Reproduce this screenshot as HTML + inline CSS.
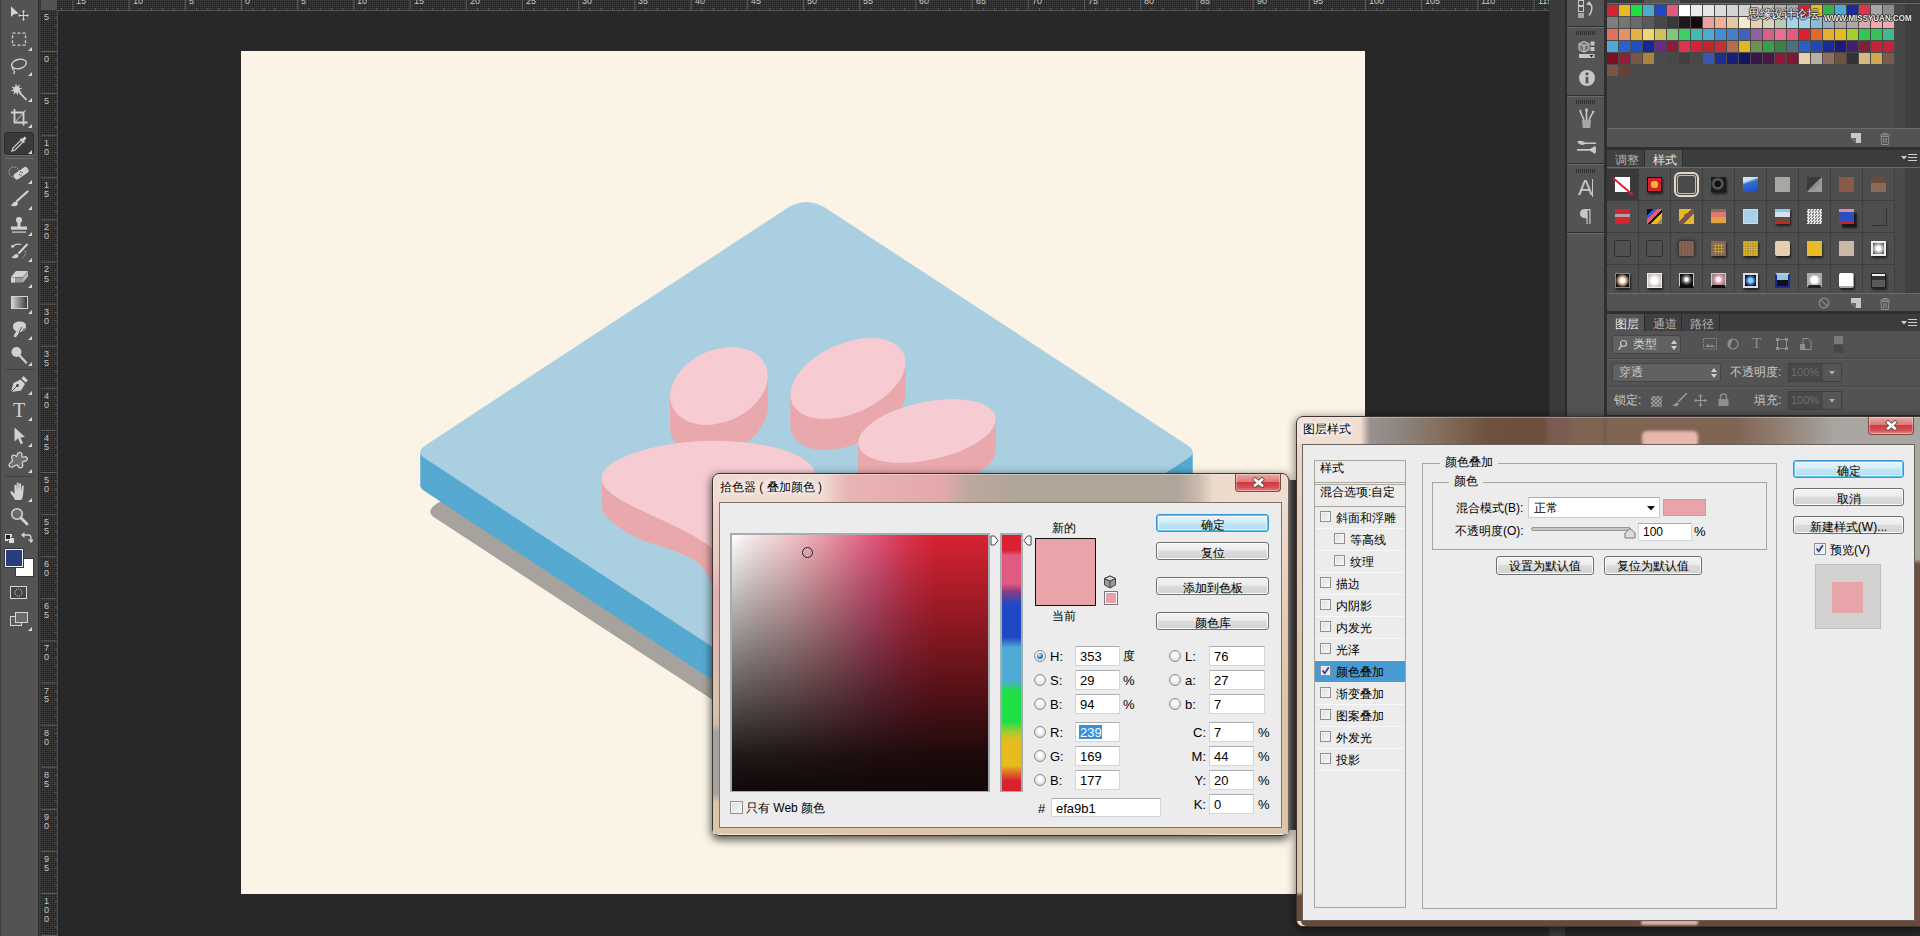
<!DOCTYPE html>
<html lang="zh"><head><meta charset="utf-8"><title>Photoshop</title>
<style>
html,body{margin:0;padding:0}
body{width:1920px;height:936px;overflow:hidden;background:#282828;position:relative;font-family:"Liberation Sans",sans-serif}
#r{position:absolute;left:0;top:0;width:1920px;height:936px;overflow:hidden}
#r div,#r svg,#r span.t{position:absolute}
#r span.t{white-space:nowrap;display:block}
</style></head>
<body><div id="r">
<!-- document canvas + artwork -->
<div style="left:241px;top:51px;width:1124px;height:843px;background:#fbf4e6"></div>
<svg style="left:0;top:0" width="1920" height="936" viewBox="0 0 1920 936"><path d="M796.6 267.9Q816.5 254.9 836.4 267.9L1197.8 504.8Q1207.8 511.4 1197.8 518.0L836.4 754.9Q816.5 767.9 796.6 754.9L435.2 518.0Q425.2 511.4 435.2 504.8Z" fill="#a6a29e"/><path d="M786.6 241.5Q806.5 228.5 826.4 241.5L1187.8 478.4Q1197.8 485.0 1187.8 491.6L826.4 728.5Q806.5 741.5 786.6 728.5L425.2 491.6Q415.2 485.0 425.2 478.4Z" fill="#56a9d0"/><path d="M786.6 238.5Q806.5 225.5 826.4 238.5L1187.8 475.4Q1197.8 482.0 1187.8 488.6L826.4 725.5Q806.5 738.5 786.6 725.5L425.2 488.6Q415.2 482.0 425.2 475.4Z" fill="#56a9d0"/><path d="M786.6 235.5Q806.5 222.5 826.4 235.5L1187.8 472.4Q1197.8 479.0 1187.8 485.6L826.4 722.5Q806.5 735.5 786.6 722.5L425.2 485.6Q415.2 479.0 425.2 472.4Z" fill="#56a9d0"/><path d="M786.6 232.5Q806.5 219.5 826.4 232.5L1187.8 469.4Q1197.8 476.0 1187.8 482.6L826.4 719.5Q806.5 732.5 786.6 719.5L425.2 482.6Q415.2 476.0 425.2 469.4Z" fill="#56a9d0"/><path d="M786.6 229.5Q806.5 216.5 826.4 229.5L1187.8 466.4Q1197.8 473.0 1187.8 479.6L826.4 716.5Q806.5 729.5 786.6 716.5L425.2 479.6Q415.2 473.0 425.2 466.4Z" fill="#56a9d0"/><path d="M786.6 226.5Q806.5 213.5 826.4 226.5L1187.8 463.4Q1197.8 470.0 1187.8 476.6L826.4 713.5Q806.5 726.5 786.6 713.5L425.2 476.6Q415.2 470.0 425.2 463.4Z" fill="#56a9d0"/><path d="M786.6 223.5Q806.5 210.5 826.4 223.5L1187.8 460.4Q1197.8 467.0 1187.8 473.6L826.4 710.5Q806.5 723.5 786.6 710.5L425.2 473.6Q415.2 467.0 425.2 460.4Z" fill="#56a9d0"/><path d="M786.6 220.5Q806.5 207.5 826.4 220.5L1187.8 457.4Q1197.8 464.0 1187.8 470.6L826.4 707.5Q806.5 720.5 786.6 707.5L425.2 470.6Q415.2 464.0 425.2 457.4Z" fill="#56a9d0"/><path d="M786.6 217.5Q806.5 204.5 826.4 217.5L1187.8 454.4Q1197.8 461.0 1187.8 467.6L826.4 704.5Q806.5 717.5 786.6 704.5L425.2 467.6Q415.2 461.0 425.2 454.4Z" fill="#56a9d0"/><path d="M786.6 214.5Q806.5 201.5 826.4 214.5L1187.8 451.4Q1197.8 458.0 1187.8 464.6L826.4 701.5Q806.5 714.5 786.6 701.5L425.2 464.6Q415.2 458.0 425.2 451.4Z" fill="#56a9d0"/><path d="M786.6 211.5Q806.5 198.5 826.4 211.5L1187.8 448.4Q1197.8 455.0 1187.8 461.6L826.4 698.5Q806.5 711.5 786.6 698.5L425.2 461.6Q415.2 455.0 425.2 448.4Z" fill="#56a9d0"/><path d="M786.6 208.5Q806.5 195.5 826.4 208.5L1187.8 445.4Q1197.8 452.0 1187.8 458.6L826.4 695.5Q806.5 708.5 786.6 695.5L425.2 458.6Q415.2 452.0 425.2 445.4Z" fill="#a9cfe0"/><ellipse cx="719" cy="417" rx="51" ry="36" transform="rotate(-24 719 417)" fill="#e9a8ac"/><ellipse cx="719" cy="414" rx="51" ry="36" transform="rotate(-24 719 414)" fill="#e9a8ac"/><ellipse cx="719" cy="411" rx="51" ry="36" transform="rotate(-24 719 411)" fill="#e9a8ac"/><ellipse cx="719" cy="408" rx="51" ry="36" transform="rotate(-24 719 408)" fill="#e9a8ac"/><ellipse cx="719" cy="405" rx="51" ry="36" transform="rotate(-24 719 405)" fill="#e9a8ac"/><ellipse cx="719" cy="402" rx="51" ry="36" transform="rotate(-24 719 402)" fill="#e9a8ac"/><ellipse cx="719" cy="399" rx="51" ry="36" transform="rotate(-24 719 399)" fill="#e9a8ac"/><ellipse cx="719" cy="396" rx="51" ry="36" transform="rotate(-24 719 396)" fill="#e9a8ac"/><ellipse cx="719" cy="393" rx="51" ry="36" transform="rotate(-24 719 393)" fill="#e9a8ac"/><ellipse cx="719" cy="390" rx="51" ry="36" transform="rotate(-24 719 390)" fill="#e9a8ac"/><ellipse cx="719" cy="387" rx="51" ry="36" transform="rotate(-24 719 387)" fill="#e9a8ac"/><ellipse cx="848" cy="409.5" rx="61" ry="35" transform="rotate(-24 848 409.5)" fill="#e9a8ac"/><ellipse cx="848" cy="406.5" rx="61" ry="35" transform="rotate(-24 848 406.5)" fill="#e9a8ac"/><ellipse cx="848" cy="403.5" rx="61" ry="35" transform="rotate(-24 848 403.5)" fill="#e9a8ac"/><ellipse cx="848" cy="400.5" rx="61" ry="35" transform="rotate(-24 848 400.5)" fill="#e9a8ac"/><ellipse cx="848" cy="397.5" rx="61" ry="35" transform="rotate(-24 848 397.5)" fill="#e9a8ac"/><ellipse cx="848" cy="394.5" rx="61" ry="35" transform="rotate(-24 848 394.5)" fill="#e9a8ac"/><ellipse cx="848" cy="391.5" rx="61" ry="35" transform="rotate(-24 848 391.5)" fill="#e9a8ac"/><ellipse cx="848" cy="388.5" rx="61" ry="35" transform="rotate(-24 848 388.5)" fill="#e9a8ac"/><ellipse cx="848" cy="385.5" rx="61" ry="35" transform="rotate(-24 848 385.5)" fill="#e9a8ac"/><ellipse cx="848" cy="382.5" rx="61" ry="35" transform="rotate(-24 848 382.5)" fill="#e9a8ac"/><ellipse cx="848" cy="379.5" rx="61" ry="35" transform="rotate(-24 848 379.5)" fill="#e9a8ac"/><ellipse cx="927" cy="462" rx="70" ry="29" transform="rotate(-12 927 462)" fill="#e9a8ac"/><ellipse cx="927" cy="459" rx="70" ry="29" transform="rotate(-12 927 459)" fill="#e9a8ac"/><ellipse cx="927" cy="456" rx="70" ry="29" transform="rotate(-12 927 456)" fill="#e9a8ac"/><ellipse cx="927" cy="453" rx="70" ry="29" transform="rotate(-12 927 453)" fill="#e9a8ac"/><ellipse cx="927" cy="450" rx="70" ry="29" transform="rotate(-12 927 450)" fill="#e9a8ac"/><ellipse cx="927" cy="447" rx="70" ry="29" transform="rotate(-12 927 447)" fill="#e9a8ac"/><ellipse cx="927" cy="444" rx="70" ry="29" transform="rotate(-12 927 444)" fill="#e9a8ac"/><ellipse cx="927" cy="441" rx="70" ry="29" transform="rotate(-12 927 441)" fill="#e9a8ac"/><ellipse cx="927" cy="438" rx="70" ry="29" transform="rotate(-12 927 438)" fill="#e9a8ac"/><ellipse cx="927" cy="435" rx="70" ry="29" transform="rotate(-12 927 435)" fill="#e9a8ac"/><ellipse cx="927" cy="432" rx="70" ry="29" transform="rotate(-12 927 432)" fill="#e9a8ac"/><path d="M602 476V508C604 516 612 522 624.4 531C634 537 645 541.500 656.4 545C668 548.500 674 550.500 680 553C688 556.500 693 559 697 562C701 565.500 703.500 568.500 705 571C708 575.500 710.500 580 712 584L720 600V540L650 480Z" fill="#e9a8ac"/><path d="M602 476 C604 462 640 445 700 441 C760 439 806 452 814 470 C822 492 790 520 800 560 C806 590 830 620 870 650 C800 600 740 560 712 548 C690 530 640 512 616 497 C606 490 601 484 602 476Z" fill="#f6ccd2"/><ellipse cx="719" cy="386" rx="51" ry="36" transform="rotate(-24 719 386)" fill="#f6ccd2"/><ellipse cx="848" cy="378.5" rx="61" ry="35" transform="rotate(-24 848 378.5)" fill="#f6ccd2"/><ellipse cx="927" cy="431" rx="70" ry="29" transform="rotate(-12 927 431)" fill="#f6ccd2"/></svg>
<!-- rulers -->
<div style="left:40px;top:0px;width:1509px;height:11px;background:radial-gradient(circle at 0.500px 0.500px,#454545 0.600px,rgba(69,69,69,0) 0.900px) 0 0/2px 2px,#292929"></div>
<div style="left:40px;top:0px;width:18px;height:936px;background:radial-gradient(circle at 0.500px 0.500px,#454545 0.600px,rgba(69,69,69,0) 0.900px) 0 0/2px 2px,#292929"></div>
<div style="left:41px;top:0px;width:16px;height:10px;background:#535353"></div>
<div style="left:57px;top:10px;width:1492px;height:1px;background:#565656"></div>
<div style="left:57px;top:10px;width:1px;height:926px;background:#4a4a4a"></div>
<svg style="left:40px;top:0" width="1509" height="11"><rect x="21.2" y="8" width="1" height="2" fill="#5e5e5e"/><rect x="32.4" y="0" width="1" height="10" fill="#5e5e5e"/><rect x="43.6" y="8" width="1" height="2" fill="#5e5e5e"/><rect x="54.9" y="8" width="1" height="2" fill="#5e5e5e"/><rect x="66.1" y="8" width="1" height="2" fill="#5e5e5e"/><rect x="77.4" y="8" width="1" height="2" fill="#5e5e5e"/><rect x="88.6" y="0" width="1" height="10" fill="#5e5e5e"/><rect x="99.8" y="8" width="1" height="2" fill="#5e5e5e"/><rect x="111.1" y="8" width="1" height="2" fill="#5e5e5e"/><rect x="122.3" y="8" width="1" height="2" fill="#5e5e5e"/><rect x="133.6" y="8" width="1" height="2" fill="#5e5e5e"/><rect x="144.8" y="0" width="1" height="10" fill="#5e5e5e"/><rect x="156.0" y="8" width="1" height="2" fill="#5e5e5e"/><rect x="167.3" y="8" width="1" height="2" fill="#5e5e5e"/><rect x="178.5" y="8" width="1" height="2" fill="#5e5e5e"/><rect x="189.8" y="8" width="1" height="2" fill="#5e5e5e"/><rect x="201.0" y="0" width="1" height="10" fill="#5e5e5e"/><rect x="212.2" y="8" width="1" height="2" fill="#5e5e5e"/><rect x="223.5" y="8" width="1" height="2" fill="#5e5e5e"/><rect x="234.7" y="8" width="1" height="2" fill="#5e5e5e"/><rect x="246.0" y="8" width="1" height="2" fill="#5e5e5e"/><rect x="257.2" y="0" width="1" height="10" fill="#5e5e5e"/><rect x="268.4" y="8" width="1" height="2" fill="#5e5e5e"/><rect x="279.7" y="8" width="1" height="2" fill="#5e5e5e"/><rect x="290.9" y="8" width="1" height="2" fill="#5e5e5e"/><rect x="302.2" y="8" width="1" height="2" fill="#5e5e5e"/><rect x="313.4" y="0" width="1" height="10" fill="#5e5e5e"/><rect x="324.6" y="8" width="1" height="2" fill="#5e5e5e"/><rect x="335.9" y="8" width="1" height="2" fill="#5e5e5e"/><rect x="347.1" y="8" width="1" height="2" fill="#5e5e5e"/><rect x="358.4" y="8" width="1" height="2" fill="#5e5e5e"/><rect x="369.6" y="0" width="1" height="10" fill="#5e5e5e"/><rect x="380.8" y="8" width="1" height="2" fill="#5e5e5e"/><rect x="392.1" y="8" width="1" height="2" fill="#5e5e5e"/><rect x="403.3" y="8" width="1" height="2" fill="#5e5e5e"/><rect x="414.6" y="8" width="1" height="2" fill="#5e5e5e"/><rect x="425.8" y="0" width="1" height="10" fill="#5e5e5e"/><rect x="437.0" y="8" width="1" height="2" fill="#5e5e5e"/><rect x="448.3" y="8" width="1" height="2" fill="#5e5e5e"/><rect x="459.5" y="8" width="1" height="2" fill="#5e5e5e"/><rect x="470.8" y="8" width="1" height="2" fill="#5e5e5e"/><rect x="482.0" y="0" width="1" height="10" fill="#5e5e5e"/><rect x="493.2" y="8" width="1" height="2" fill="#5e5e5e"/><rect x="504.5" y="8" width="1" height="2" fill="#5e5e5e"/><rect x="515.7" y="8" width="1" height="2" fill="#5e5e5e"/><rect x="527.0" y="8" width="1" height="2" fill="#5e5e5e"/><rect x="538.2" y="0" width="1" height="10" fill="#5e5e5e"/><rect x="549.4" y="8" width="1" height="2" fill="#5e5e5e"/><rect x="560.7" y="8" width="1" height="2" fill="#5e5e5e"/><rect x="571.9" y="8" width="1" height="2" fill="#5e5e5e"/><rect x="583.2" y="8" width="1" height="2" fill="#5e5e5e"/><rect x="594.4" y="0" width="1" height="10" fill="#5e5e5e"/><rect x="605.6" y="8" width="1" height="2" fill="#5e5e5e"/><rect x="616.9" y="8" width="1" height="2" fill="#5e5e5e"/><rect x="628.1" y="8" width="1" height="2" fill="#5e5e5e"/><rect x="639.4" y="8" width="1" height="2" fill="#5e5e5e"/><rect x="650.6" y="0" width="1" height="10" fill="#5e5e5e"/><rect x="661.8" y="8" width="1" height="2" fill="#5e5e5e"/><rect x="673.1" y="8" width="1" height="2" fill="#5e5e5e"/><rect x="684.3" y="8" width="1" height="2" fill="#5e5e5e"/><rect x="695.6" y="8" width="1" height="2" fill="#5e5e5e"/><rect x="706.8" y="0" width="1" height="10" fill="#5e5e5e"/><rect x="718.0" y="8" width="1" height="2" fill="#5e5e5e"/><rect x="729.3" y="8" width="1" height="2" fill="#5e5e5e"/><rect x="740.5" y="8" width="1" height="2" fill="#5e5e5e"/><rect x="751.8" y="8" width="1" height="2" fill="#5e5e5e"/><rect x="763.0" y="0" width="1" height="10" fill="#5e5e5e"/><rect x="774.2" y="8" width="1" height="2" fill="#5e5e5e"/><rect x="785.5" y="8" width="1" height="2" fill="#5e5e5e"/><rect x="796.7" y="8" width="1" height="2" fill="#5e5e5e"/><rect x="808.0" y="8" width="1" height="2" fill="#5e5e5e"/><rect x="819.2" y="0" width="1" height="10" fill="#5e5e5e"/><rect x="830.4" y="8" width="1" height="2" fill="#5e5e5e"/><rect x="841.7" y="8" width="1" height="2" fill="#5e5e5e"/><rect x="852.9" y="8" width="1" height="2" fill="#5e5e5e"/><rect x="864.2" y="8" width="1" height="2" fill="#5e5e5e"/><rect x="875.4" y="0" width="1" height="10" fill="#5e5e5e"/><rect x="886.6" y="8" width="1" height="2" fill="#5e5e5e"/><rect x="897.9" y="8" width="1" height="2" fill="#5e5e5e"/><rect x="909.1" y="8" width="1" height="2" fill="#5e5e5e"/><rect x="920.4" y="8" width="1" height="2" fill="#5e5e5e"/><rect x="931.6" y="0" width="1" height="10" fill="#5e5e5e"/><rect x="942.8" y="8" width="1" height="2" fill="#5e5e5e"/><rect x="954.1" y="8" width="1" height="2" fill="#5e5e5e"/><rect x="965.3" y="8" width="1" height="2" fill="#5e5e5e"/><rect x="976.6" y="8" width="1" height="2" fill="#5e5e5e"/><rect x="987.8" y="0" width="1" height="10" fill="#5e5e5e"/><rect x="999.0" y="8" width="1" height="2" fill="#5e5e5e"/><rect x="1010.3" y="8" width="1" height="2" fill="#5e5e5e"/><rect x="1021.5" y="8" width="1" height="2" fill="#5e5e5e"/><rect x="1032.8" y="8" width="1" height="2" fill="#5e5e5e"/><rect x="1044.0" y="0" width="1" height="10" fill="#5e5e5e"/><rect x="1055.2" y="8" width="1" height="2" fill="#5e5e5e"/><rect x="1066.5" y="8" width="1" height="2" fill="#5e5e5e"/><rect x="1077.7" y="8" width="1" height="2" fill="#5e5e5e"/><rect x="1089.0" y="8" width="1" height="2" fill="#5e5e5e"/><rect x="1100.2" y="0" width="1" height="10" fill="#5e5e5e"/><rect x="1111.4" y="8" width="1" height="2" fill="#5e5e5e"/><rect x="1122.7" y="8" width="1" height="2" fill="#5e5e5e"/><rect x="1133.9" y="8" width="1" height="2" fill="#5e5e5e"/><rect x="1145.2" y="8" width="1" height="2" fill="#5e5e5e"/><rect x="1156.4" y="0" width="1" height="10" fill="#5e5e5e"/><rect x="1167.6" y="8" width="1" height="2" fill="#5e5e5e"/><rect x="1178.9" y="8" width="1" height="2" fill="#5e5e5e"/><rect x="1190.1" y="8" width="1" height="2" fill="#5e5e5e"/><rect x="1201.4" y="8" width="1" height="2" fill="#5e5e5e"/><rect x="1212.6" y="0" width="1" height="10" fill="#5e5e5e"/><rect x="1223.8" y="8" width="1" height="2" fill="#5e5e5e"/><rect x="1235.1" y="8" width="1" height="2" fill="#5e5e5e"/><rect x="1246.3" y="8" width="1" height="2" fill="#5e5e5e"/><rect x="1257.6" y="8" width="1" height="2" fill="#5e5e5e"/><rect x="1268.8" y="0" width="1" height="10" fill="#5e5e5e"/><rect x="1280.0" y="8" width="1" height="2" fill="#5e5e5e"/><rect x="1291.3" y="8" width="1" height="2" fill="#5e5e5e"/><rect x="1302.5" y="8" width="1" height="2" fill="#5e5e5e"/><rect x="1313.8" y="8" width="1" height="2" fill="#5e5e5e"/><rect x="1325.0" y="0" width="1" height="10" fill="#5e5e5e"/><rect x="1336.2" y="8" width="1" height="2" fill="#5e5e5e"/><rect x="1347.5" y="8" width="1" height="2" fill="#5e5e5e"/><rect x="1358.7" y="8" width="1" height="2" fill="#5e5e5e"/><rect x="1370.0" y="8" width="1" height="2" fill="#5e5e5e"/><rect x="1381.2" y="0" width="1" height="10" fill="#5e5e5e"/><rect x="1392.4" y="8" width="1" height="2" fill="#5e5e5e"/><rect x="1403.7" y="8" width="1" height="2" fill="#5e5e5e"/><rect x="1414.9" y="8" width="1" height="2" fill="#5e5e5e"/><rect x="1426.2" y="8" width="1" height="2" fill="#5e5e5e"/><rect x="1437.4" y="0" width="1" height="10" fill="#5e5e5e"/><rect x="1448.6" y="8" width="1" height="2" fill="#5e5e5e"/><rect x="1459.9" y="8" width="1" height="2" fill="#5e5e5e"/><rect x="1471.1" y="8" width="1" height="2" fill="#5e5e5e"/><rect x="1482.4" y="8" width="1" height="2" fill="#5e5e5e"/><rect x="1493.6" y="0" width="1" height="10" fill="#5e5e5e"/><rect x="1504.8" y="8" width="1" height="2" fill="#5e5e5e"/></svg>
<span class="t" style="left:76px;top:-4px;font:9px 'Liberation Sans',sans-serif;color:#c9c5c0;line-height:10px">15</span>
<span class="t" style="left:133px;top:-4px;font:9px 'Liberation Sans',sans-serif;color:#c9c5c0;line-height:10px">10</span>
<span class="t" style="left:189px;top:-4px;font:9px 'Liberation Sans',sans-serif;color:#c9c5c0;line-height:10px">5</span>
<span class="t" style="left:245px;top:-4px;font:9px 'Liberation Sans',sans-serif;color:#c9c5c0;line-height:10px">0</span>
<span class="t" style="left:301px;top:-4px;font:9px 'Liberation Sans',sans-serif;color:#c9c5c0;line-height:10px">5</span>
<span class="t" style="left:357px;top:-4px;font:9px 'Liberation Sans',sans-serif;color:#c9c5c0;line-height:10px">10</span>
<span class="t" style="left:414px;top:-4px;font:9px 'Liberation Sans',sans-serif;color:#c9c5c0;line-height:10px">15</span>
<span class="t" style="left:470px;top:-4px;font:9px 'Liberation Sans',sans-serif;color:#c9c5c0;line-height:10px">20</span>
<span class="t" style="left:526px;top:-4px;font:9px 'Liberation Sans',sans-serif;color:#c9c5c0;line-height:10px">25</span>
<span class="t" style="left:582px;top:-4px;font:9px 'Liberation Sans',sans-serif;color:#c9c5c0;line-height:10px">30</span>
<span class="t" style="left:638px;top:-4px;font:9px 'Liberation Sans',sans-serif;color:#c9c5c0;line-height:10px">35</span>
<span class="t" style="left:695px;top:-4px;font:9px 'Liberation Sans',sans-serif;color:#c9c5c0;line-height:10px">40</span>
<span class="t" style="left:751px;top:-4px;font:9px 'Liberation Sans',sans-serif;color:#c9c5c0;line-height:10px">45</span>
<span class="t" style="left:807px;top:-4px;font:9px 'Liberation Sans',sans-serif;color:#c9c5c0;line-height:10px">50</span>
<span class="t" style="left:863px;top:-4px;font:9px 'Liberation Sans',sans-serif;color:#c9c5c0;line-height:10px">55</span>
<span class="t" style="left:919px;top:-4px;font:9px 'Liberation Sans',sans-serif;color:#c9c5c0;line-height:10px">60</span>
<span class="t" style="left:976px;top:-4px;font:9px 'Liberation Sans',sans-serif;color:#c9c5c0;line-height:10px">65</span>
<span class="t" style="left:1032px;top:-4px;font:9px 'Liberation Sans',sans-serif;color:#c9c5c0;line-height:10px">70</span>
<span class="t" style="left:1088px;top:-4px;font:9px 'Liberation Sans',sans-serif;color:#c9c5c0;line-height:10px">75</span>
<span class="t" style="left:1144px;top:-4px;font:9px 'Liberation Sans',sans-serif;color:#c9c5c0;line-height:10px">80</span>
<span class="t" style="left:1200px;top:-4px;font:9px 'Liberation Sans',sans-serif;color:#c9c5c0;line-height:10px">85</span>
<span class="t" style="left:1257px;top:-4px;font:9px 'Liberation Sans',sans-serif;color:#c9c5c0;line-height:10px">90</span>
<span class="t" style="left:1313px;top:-4px;font:9px 'Liberation Sans',sans-serif;color:#c9c5c0;line-height:10px">95</span>
<span class="t" style="left:1369px;top:-4px;font:9px 'Liberation Sans',sans-serif;color:#c9c5c0;line-height:10px">100</span>
<span class="t" style="left:1425px;top:-4px;font:9px 'Liberation Sans',sans-serif;color:#c9c5c0;line-height:10px">105</span>
<span class="t" style="left:1481px;top:-4px;font:9px 'Liberation Sans',sans-serif;color:#c9c5c0;line-height:10px">110</span>
<span class="t" style="left:1538px;top:-4px;font:9px 'Liberation Sans',sans-serif;color:#c9c5c0;line-height:10px">115</span>
<svg style="left:40px;top:0" width="18" height="936"><rect x="15" y="17.3" width="2" height="1" fill="#5e5e5e"/><rect x="15" y="25.7" width="2" height="1" fill="#5e5e5e"/><rect x="15" y="34.2" width="2" height="1" fill="#5e5e5e"/><rect x="15" y="42.6" width="2" height="1" fill="#5e5e5e"/><rect x="1" y="51.0" width="16" height="1" fill="#5e5e5e"/><rect x="15" y="59.4" width="2" height="1" fill="#5e5e5e"/><rect x="15" y="67.8" width="2" height="1" fill="#5e5e5e"/><rect x="15" y="76.3" width="2" height="1" fill="#5e5e5e"/><rect x="15" y="84.7" width="2" height="1" fill="#5e5e5e"/><rect x="1" y="93.1" width="16" height="1" fill="#5e5e5e"/><rect x="15" y="101.5" width="2" height="1" fill="#5e5e5e"/><rect x="15" y="109.9" width="2" height="1" fill="#5e5e5e"/><rect x="15" y="118.4" width="2" height="1" fill="#5e5e5e"/><rect x="15" y="126.8" width="2" height="1" fill="#5e5e5e"/><rect x="1" y="135.2" width="16" height="1" fill="#5e5e5e"/><rect x="15" y="143.6" width="2" height="1" fill="#5e5e5e"/><rect x="15" y="152.0" width="2" height="1" fill="#5e5e5e"/><rect x="15" y="160.5" width="2" height="1" fill="#5e5e5e"/><rect x="15" y="168.9" width="2" height="1" fill="#5e5e5e"/><rect x="1" y="177.3" width="16" height="1" fill="#5e5e5e"/><rect x="15" y="185.7" width="2" height="1" fill="#5e5e5e"/><rect x="15" y="194.1" width="2" height="1" fill="#5e5e5e"/><rect x="15" y="202.6" width="2" height="1" fill="#5e5e5e"/><rect x="15" y="211.0" width="2" height="1" fill="#5e5e5e"/><rect x="1" y="219.4" width="16" height="1" fill="#5e5e5e"/><rect x="15" y="227.8" width="2" height="1" fill="#5e5e5e"/><rect x="15" y="236.2" width="2" height="1" fill="#5e5e5e"/><rect x="15" y="244.7" width="2" height="1" fill="#5e5e5e"/><rect x="15" y="253.1" width="2" height="1" fill="#5e5e5e"/><rect x="1" y="261.5" width="16" height="1" fill="#5e5e5e"/><rect x="15" y="269.9" width="2" height="1" fill="#5e5e5e"/><rect x="15" y="278.3" width="2" height="1" fill="#5e5e5e"/><rect x="15" y="286.8" width="2" height="1" fill="#5e5e5e"/><rect x="15" y="295.2" width="2" height="1" fill="#5e5e5e"/><rect x="1" y="303.6" width="16" height="1" fill="#5e5e5e"/><rect x="15" y="312.0" width="2" height="1" fill="#5e5e5e"/><rect x="15" y="320.4" width="2" height="1" fill="#5e5e5e"/><rect x="15" y="328.9" width="2" height="1" fill="#5e5e5e"/><rect x="15" y="337.3" width="2" height="1" fill="#5e5e5e"/><rect x="1" y="345.7" width="16" height="1" fill="#5e5e5e"/><rect x="15" y="354.1" width="2" height="1" fill="#5e5e5e"/><rect x="15" y="362.5" width="2" height="1" fill="#5e5e5e"/><rect x="15" y="371.0" width="2" height="1" fill="#5e5e5e"/><rect x="15" y="379.4" width="2" height="1" fill="#5e5e5e"/><rect x="1" y="387.8" width="16" height="1" fill="#5e5e5e"/><rect x="15" y="396.2" width="2" height="1" fill="#5e5e5e"/><rect x="15" y="404.6" width="2" height="1" fill="#5e5e5e"/><rect x="15" y="413.1" width="2" height="1" fill="#5e5e5e"/><rect x="15" y="421.5" width="2" height="1" fill="#5e5e5e"/><rect x="1" y="429.9" width="16" height="1" fill="#5e5e5e"/><rect x="15" y="438.3" width="2" height="1" fill="#5e5e5e"/><rect x="15" y="446.7" width="2" height="1" fill="#5e5e5e"/><rect x="15" y="455.2" width="2" height="1" fill="#5e5e5e"/><rect x="15" y="463.6" width="2" height="1" fill="#5e5e5e"/><rect x="1" y="472.0" width="16" height="1" fill="#5e5e5e"/><rect x="15" y="480.4" width="2" height="1" fill="#5e5e5e"/><rect x="15" y="488.8" width="2" height="1" fill="#5e5e5e"/><rect x="15" y="497.3" width="2" height="1" fill="#5e5e5e"/><rect x="15" y="505.7" width="2" height="1" fill="#5e5e5e"/><rect x="1" y="514.1" width="16" height="1" fill="#5e5e5e"/><rect x="15" y="522.5" width="2" height="1" fill="#5e5e5e"/><rect x="15" y="530.9" width="2" height="1" fill="#5e5e5e"/><rect x="15" y="539.4" width="2" height="1" fill="#5e5e5e"/><rect x="15" y="547.8" width="2" height="1" fill="#5e5e5e"/><rect x="1" y="556.2" width="16" height="1" fill="#5e5e5e"/><rect x="15" y="564.6" width="2" height="1" fill="#5e5e5e"/><rect x="15" y="573.0" width="2" height="1" fill="#5e5e5e"/><rect x="15" y="581.5" width="2" height="1" fill="#5e5e5e"/><rect x="15" y="589.9" width="2" height="1" fill="#5e5e5e"/><rect x="1" y="598.3" width="16" height="1" fill="#5e5e5e"/><rect x="15" y="606.7" width="2" height="1" fill="#5e5e5e"/><rect x="15" y="615.1" width="2" height="1" fill="#5e5e5e"/><rect x="15" y="623.6" width="2" height="1" fill="#5e5e5e"/><rect x="15" y="632.0" width="2" height="1" fill="#5e5e5e"/><rect x="1" y="640.4" width="16" height="1" fill="#5e5e5e"/><rect x="15" y="648.8" width="2" height="1" fill="#5e5e5e"/><rect x="15" y="657.2" width="2" height="1" fill="#5e5e5e"/><rect x="15" y="665.7" width="2" height="1" fill="#5e5e5e"/><rect x="15" y="674.1" width="2" height="1" fill="#5e5e5e"/><rect x="1" y="682.5" width="16" height="1" fill="#5e5e5e"/><rect x="15" y="690.9" width="2" height="1" fill="#5e5e5e"/><rect x="15" y="699.3" width="2" height="1" fill="#5e5e5e"/><rect x="15" y="707.8" width="2" height="1" fill="#5e5e5e"/><rect x="15" y="716.2" width="2" height="1" fill="#5e5e5e"/><rect x="1" y="724.6" width="16" height="1" fill="#5e5e5e"/><rect x="15" y="733.0" width="2" height="1" fill="#5e5e5e"/><rect x="15" y="741.4" width="2" height="1" fill="#5e5e5e"/><rect x="15" y="749.9" width="2" height="1" fill="#5e5e5e"/><rect x="15" y="758.3" width="2" height="1" fill="#5e5e5e"/><rect x="1" y="766.7" width="16" height="1" fill="#5e5e5e"/><rect x="15" y="775.1" width="2" height="1" fill="#5e5e5e"/><rect x="15" y="783.5" width="2" height="1" fill="#5e5e5e"/><rect x="15" y="792.0" width="2" height="1" fill="#5e5e5e"/><rect x="15" y="800.4" width="2" height="1" fill="#5e5e5e"/><rect x="1" y="808.8" width="16" height="1" fill="#5e5e5e"/><rect x="15" y="817.2" width="2" height="1" fill="#5e5e5e"/><rect x="15" y="825.6" width="2" height="1" fill="#5e5e5e"/><rect x="15" y="834.1" width="2" height="1" fill="#5e5e5e"/><rect x="15" y="842.5" width="2" height="1" fill="#5e5e5e"/><rect x="1" y="850.9" width="16" height="1" fill="#5e5e5e"/><rect x="15" y="859.3" width="2" height="1" fill="#5e5e5e"/><rect x="15" y="867.7" width="2" height="1" fill="#5e5e5e"/><rect x="15" y="876.2" width="2" height="1" fill="#5e5e5e"/><rect x="15" y="884.6" width="2" height="1" fill="#5e5e5e"/><rect x="1" y="893.0" width="16" height="1" fill="#5e5e5e"/><rect x="15" y="901.4" width="2" height="1" fill="#5e5e5e"/><rect x="15" y="909.8" width="2" height="1" fill="#5e5e5e"/><rect x="15" y="918.3" width="2" height="1" fill="#5e5e5e"/><rect x="15" y="926.7" width="2" height="1" fill="#5e5e5e"/><rect x="1" y="935.1" width="16" height="1" fill="#5e5e5e"/></svg>
<span class="t" style="left:44px;top:12px;font:9px 'Liberation Sans',sans-serif;color:#c9c5c0;line-height:10px">5</span>
<span class="t" style="left:44px;top:54px;font:9px 'Liberation Sans',sans-serif;color:#c9c5c0;line-height:10px">0</span>
<span class="t" style="left:44px;top:96px;font:9px 'Liberation Sans',sans-serif;color:#c9c5c0;line-height:10px">5</span>
<span class="t" style="left:44px;top:138px;font:9px 'Liberation Sans',sans-serif;color:#c9c5c0;line-height:10px">1</span>
<span class="t" style="left:44px;top:147px;font:9px 'Liberation Sans',sans-serif;color:#c9c5c0;line-height:10px">0</span>
<span class="t" style="left:44px;top:180px;font:9px 'Liberation Sans',sans-serif;color:#c9c5c0;line-height:10px">1</span>
<span class="t" style="left:44px;top:189px;font:9px 'Liberation Sans',sans-serif;color:#c9c5c0;line-height:10px">5</span>
<span class="t" style="left:44px;top:222px;font:9px 'Liberation Sans',sans-serif;color:#c9c5c0;line-height:10px">2</span>
<span class="t" style="left:44px;top:231px;font:9px 'Liberation Sans',sans-serif;color:#c9c5c0;line-height:10px">0</span>
<span class="t" style="left:44px;top:264px;font:9px 'Liberation Sans',sans-serif;color:#c9c5c0;line-height:10px">2</span>
<span class="t" style="left:44px;top:274px;font:9px 'Liberation Sans',sans-serif;color:#c9c5c0;line-height:10px">5</span>
<span class="t" style="left:44px;top:307px;font:9px 'Liberation Sans',sans-serif;color:#c9c5c0;line-height:10px">3</span>
<span class="t" style="left:44px;top:316px;font:9px 'Liberation Sans',sans-serif;color:#c9c5c0;line-height:10px">0</span>
<span class="t" style="left:44px;top:349px;font:9px 'Liberation Sans',sans-serif;color:#c9c5c0;line-height:10px">3</span>
<span class="t" style="left:44px;top:358px;font:9px 'Liberation Sans',sans-serif;color:#c9c5c0;line-height:10px">5</span>
<span class="t" style="left:44px;top:391px;font:9px 'Liberation Sans',sans-serif;color:#c9c5c0;line-height:10px">4</span>
<span class="t" style="left:44px;top:400px;font:9px 'Liberation Sans',sans-serif;color:#c9c5c0;line-height:10px">0</span>
<span class="t" style="left:44px;top:433px;font:9px 'Liberation Sans',sans-serif;color:#c9c5c0;line-height:10px">4</span>
<span class="t" style="left:44px;top:442px;font:9px 'Liberation Sans',sans-serif;color:#c9c5c0;line-height:10px">5</span>
<span class="t" style="left:44px;top:475px;font:9px 'Liberation Sans',sans-serif;color:#c9c5c0;line-height:10px">5</span>
<span class="t" style="left:44px;top:484px;font:9px 'Liberation Sans',sans-serif;color:#c9c5c0;line-height:10px">0</span>
<span class="t" style="left:44px;top:517px;font:9px 'Liberation Sans',sans-serif;color:#c9c5c0;line-height:10px">5</span>
<span class="t" style="left:44px;top:526px;font:9px 'Liberation Sans',sans-serif;color:#c9c5c0;line-height:10px">5</span>
<span class="t" style="left:44px;top:559px;font:9px 'Liberation Sans',sans-serif;color:#c9c5c0;line-height:10px">6</span>
<span class="t" style="left:44px;top:568px;font:9px 'Liberation Sans',sans-serif;color:#c9c5c0;line-height:10px">0</span>
<span class="t" style="left:44px;top:601px;font:9px 'Liberation Sans',sans-serif;color:#c9c5c0;line-height:10px">6</span>
<span class="t" style="left:44px;top:610px;font:9px 'Liberation Sans',sans-serif;color:#c9c5c0;line-height:10px">5</span>
<span class="t" style="left:44px;top:643px;font:9px 'Liberation Sans',sans-serif;color:#c9c5c0;line-height:10px">7</span>
<span class="t" style="left:44px;top:652px;font:9px 'Liberation Sans',sans-serif;color:#c9c5c0;line-height:10px">0</span>
<span class="t" style="left:44px;top:686px;font:9px 'Liberation Sans',sans-serif;color:#c9c5c0;line-height:10px">7</span>
<span class="t" style="left:44px;top:694px;font:9px 'Liberation Sans',sans-serif;color:#c9c5c0;line-height:10px">5</span>
<span class="t" style="left:44px;top:728px;font:9px 'Liberation Sans',sans-serif;color:#c9c5c0;line-height:10px">8</span>
<span class="t" style="left:44px;top:737px;font:9px 'Liberation Sans',sans-serif;color:#c9c5c0;line-height:10px">0</span>
<span class="t" style="left:44px;top:770px;font:9px 'Liberation Sans',sans-serif;color:#c9c5c0;line-height:10px">8</span>
<span class="t" style="left:44px;top:779px;font:9px 'Liberation Sans',sans-serif;color:#c9c5c0;line-height:10px">5</span>
<span class="t" style="left:44px;top:812px;font:9px 'Liberation Sans',sans-serif;color:#c9c5c0;line-height:10px">9</span>
<span class="t" style="left:44px;top:821px;font:9px 'Liberation Sans',sans-serif;color:#c9c5c0;line-height:10px">0</span>
<span class="t" style="left:44px;top:854px;font:9px 'Liberation Sans',sans-serif;color:#c9c5c0;line-height:10px">9</span>
<span class="t" style="left:44px;top:863px;font:9px 'Liberation Sans',sans-serif;color:#c9c5c0;line-height:10px">5</span>
<span class="t" style="left:44px;top:896px;font:9px 'Liberation Sans',sans-serif;color:#c9c5c0;line-height:10px">1</span>
<span class="t" style="left:44px;top:905px;font:9px 'Liberation Sans',sans-serif;color:#c9c5c0;line-height:10px">0</span>
<span class="t" style="left:44px;top:914px;font:9px 'Liberation Sans',sans-serif;color:#c9c5c0;line-height:10px">0</span>
<!-- tool bar -->
<div style="left:0px;top:0px;width:38px;height:936px;background:#535353"></div>
<div style="left:0px;top:0px;width:1px;height:936px;background:#3f3f3f"></div>
<div style="left:38px;top:0px;width:1px;height:936px;background:#2a2a2a"></div>
<div style="left:39px;top:0px;width:1px;height:936px;background:#3d3d3d"></div>
<div style="left:4px;top:132px;width:30px;height:23px;background:#3a3a3a;border:1px solid #2c2c2c;border-radius:3px;box-sizing:border-box;box-shadow:0 1px 0 #6a6a6a"></div>
<div style="left:5px;top:158px;width:29px;height:1px;background:#6b6b6b"></div>
<div style="left:5px;top:369px;width:29px;height:1px;background:#3e3e3e"></div>
<div style="left:5px;top:476px;width:29px;height:1px;background:#3e3e3e"></div>
<svg style="left:10px;top:5px" width="20" height="18" viewBox="0 0 20 18"><path d="M1 1.300V12L3.800 9.300L8.600 8.600Z" fill="#cfd3d5"/><path d="M13.500 6v9M9 10.500h9" stroke="#cfd3d5" stroke-width="1" fill="none"/><path d="M13.500 5l1.600 2h-3.200zM13.500 16l1.600-2h-3.200zM8 10.500l2-1.600v3.200zM19 10.500l-2-1.600v3.200z" fill="#cfd3d5"/></svg>
<svg style="left:11px;top:32px" width="16" height="16" viewBox="0 0 16 16"><rect x="1.5" y="1.2" width="13" height="12" fill="none" stroke="#cfd3d5" stroke-width="1.3" stroke-dasharray="3 2"/></svg>
<svg style="left:28px;top:47px" width="4" height="4" viewBox="0 0 4 4"><path d="M4 0V4H0Z" fill="#d8d8d8"/></svg>
<svg style="left:9px;top:57px" width="20" height="18" viewBox="0 0 20 18"><ellipse cx="10" cy="7" rx="7.5" ry="4.6" transform="rotate(-14 10 7)" fill="none" stroke="#cfd3d5" stroke-width="1.4"/><path d="M4 10c-2 1 1 3 1.5 4.5c0.3 1-0.5 2-1.5 2" fill="none" stroke="#cfd3d5" stroke-width="1.2"/></svg>
<svg style="left:28px;top:72px" width="4" height="4" viewBox="0 0 4 4"><path d="M4 0V4H0Z" fill="#d8d8d8"/></svg>
<svg style="left:9px;top:82px" width="20" height="20" viewBox="0 0 20 20"><path d="M7 1l1 3.5l3-2l-1.2 3.3l3.7 0.2l-3.2 1.8l2.5 2.6l-3.6-0.6l-0.2 3.6l-2-3l-2.6 2.4l0.8-3.5l-3.6-0.4l3.2-1.6l-2.4-2.8l3.6 0.8z" fill="#cfd3d5"/><path d="M10 10l7.5 8" stroke="#cfd3d5" stroke-width="1.8"/></svg>
<svg style="left:28px;top:98px" width="4" height="4" viewBox="0 0 4 4"><path d="M4 0V4H0Z" fill="#d8d8d8"/></svg>
<svg style="left:10px;top:108px" width="18" height="20" viewBox="0 0 18 20"><path d="M4.5 1v13.5h13M1 4.5h12.5v13" fill="none" stroke="#cfd3d5" stroke-width="1.8"/><path d="M6 13L16 2" stroke="#cfd3d5" stroke-width="1"/></svg>
<svg style="left:28px;top:124px" width="4" height="4" viewBox="0 0 4 4"><path d="M4 0V4H0Z" fill="#d8d8d8"/></svg>
<svg style="left:10px;top:135px" width="18" height="18" viewBox="0 0 18 18"><path d="M2 16l1-3l8-8l2 2l-8 8z" fill="none" stroke="#cfd3d5" stroke-width="1.2"/><path d="M10 4l4 4l1-1l-1-1l2-2c1-1-1-3-2-2l-2 2l-1-1z" fill="#cfd3d5"/></svg>
<svg style="left:28px;top:150px" width="4" height="4" viewBox="0 0 4 4"><path d="M4 0V4H0Z" fill="#d8d8d8"/></svg>
<svg style="left:8px;top:163px" width="22" height="20" viewBox="0 0 22 20"><circle cx="6" cy="9" r="5" fill="none" stroke="#cfd3d5" stroke-width="1" stroke-dasharray="1.2 1.2"/><rect x="5" y="7" width="16" height="6.5" rx="2.5" transform="rotate(-35 13 10)" fill="#cfd3d5"/><circle cx="11.5" cy="11.5" r="0.7" fill="#555"/><circle cx="14" cy="9.8" r="0.7" fill="#555"/><circle cx="13" cy="12.6" r="0.7" fill="#555"/><circle cx="12.6" cy="8.7" r="0.7" fill="#555"/></svg>
<svg style="left:28px;top:180px" width="4" height="4" viewBox="0 0 4 4"><path d="M4 0V4H0Z" fill="#d8d8d8"/></svg>
<svg style="left:9px;top:190px" width="20" height="18" viewBox="0 0 20 18"><path d="M18.5 1.5L8 11" stroke="#cfd3d5" stroke-width="2.2" stroke-linecap="round"/><path d="M1 15c3 0 3-4 6.5-3.5c1.5 0.5 2 2.5 0.5 4c-2 1.5-5 0.5-7-0.5z" fill="#cfd3d5"/></svg>
<svg style="left:28px;top:206px" width="4" height="4" viewBox="0 0 4 4"><path d="M4 0V4H0Z" fill="#d8d8d8"/></svg>
<svg style="left:10px;top:216px" width="18" height="18" viewBox="0 0 18 18"><circle cx="9" cy="4" r="3" fill="#cfd3d5"/><path d="M7.5 6h3v5h-3z" fill="#cfd3d5"/><rect x="1" y="10.5" width="16" height="3.2" fill="#cfd3d5"/><rect x="2" y="15.5" width="14" height="1.2" fill="#cfd3d5"/></svg>
<svg style="left:28px;top:232px" width="4" height="4" viewBox="0 0 4 4"><path d="M4 0V4H0Z" fill="#d8d8d8"/></svg>
<svg style="left:9px;top:242px" width="20" height="18" viewBox="0 0 20 18"><path d="M18 2.5L10 11" stroke="#cfd3d5" stroke-width="2" stroke-linecap="round"/><path d="M2 15c3 0 3-3.5 6-3c1.5 0.5 2 2.3 0.5 3.6c-2 1.4-4.5 0.4-6.5-0.6z" fill="#cfd3d5"/><path d="M12 2.5c-4-1-7 0-8.500 2" fill="none" stroke="#cfd3d5" stroke-width="1.2"/><path d="M2 3l4.500 0.500l-3.500 3z" fill="#cfd3d5"/><path d="M16 9c1 3 0 5-2.500 7" fill="none" stroke="#cfd3d5" stroke-width="1" stroke-dasharray="1 1.300"/></svg>
<svg style="left:28px;top:258px" width="4" height="4" viewBox="0 0 4 4"><path d="M4 0V4H0Z" fill="#d8d8d8"/></svg>
<svg style="left:9px;top:268px" width="20" height="18" viewBox="0 0 20 18"><path d="M7 3h12l-5 6h-12z" fill="#cfd3d5"/><path d="M2 9.500h12v5h-12z" fill="#9a9a9a"/><path d="M14 9.500l5-6v5l-5 6z" fill="#b4b8ba"/><path d="M6 9.500v5h-4v-5z" fill="#cfd3d5"/></svg>
<svg style="left:28px;top:284px" width="4" height="4" viewBox="0 0 4 4"><path d="M4 0V4H0Z" fill="#d8d8d8"/></svg>
<div style="left:11px;top:296px;width:15px;height:11px;border:1px solid #cfd3d5;background:linear-gradient(90deg,#cfd3d5,#3c3c3c)"></div>
<svg style="left:28px;top:310px" width="4" height="4" viewBox="0 0 4 4"><path d="M4 0V4H0Z" fill="#d8d8d8"/></svg>
<svg style="left:10px;top:320px" width="20" height="18" viewBox="0 0 20 18"><path d="M3 6c0-3 3-4.500 7-4.500c4 0 6 1.500 6 4.500c0 4-3 6-6.500 6l-3 4.500c-1 1.500-3.500 0.500-2.500-1.300l2.300-4c-2-0.500-3.300-2.500-3.300-5.200z" fill="#cfd3d5"/><path d="M9 12l3-5M12 12l2.500-4" stroke="#555" stroke-width="1"/></svg>
<svg style="left:28px;top:336px" width="4" height="4" viewBox="0 0 4 4"><path d="M4 0V4H0Z" fill="#d8d8d8"/></svg>
<svg style="left:10px;top:346px" width="18" height="18" viewBox="0 0 18 18"><circle cx="6.500" cy="6" r="5" fill="#cfd3d5"/><path d="M10 10l6 6.500" stroke="#cfd3d5" stroke-width="2.200" stroke-linecap="round"/></svg>
<svg style="left:28px;top:362px" width="4" height="4" viewBox="0 0 4 4"><path d="M4 0V4H0Z" fill="#d8d8d8"/></svg>
<svg style="left:9px;top:374px" width="20" height="20" viewBox="0 0 20 20"><path d="M2 18l2.500-9l7-3.500l4.500 4.500l-4 6.500z" fill="#cfd3d5"/><path d="M12.500 4.500l2-2.500l4.500 4.500l-2.500 2z" fill="#cfd3d5"/><path d="M2 18l6-6" stroke="#444" stroke-width="1"/><circle cx="8.500" cy="11.500" r="1.400" fill="#444"/></svg>
<svg style="left:28px;top:391px" width="4" height="4" viewBox="0 0 4 4"><path d="M4 0V4H0Z" fill="#d8d8d8"/></svg>
<span class="t" style="left:13px;top:400px;font:20px 'Liberation Serif',serif;color:#cfd3d5;line-height:20px">T</span>
<svg style="left:28px;top:417px" width="4" height="4" viewBox="0 0 4 4"><path d="M4 0V4H0Z" fill="#d8d8d8"/></svg>
<svg style="left:12px;top:426px" width="14" height="20" viewBox="0 0 14 20"><path d="M2.500 1.500v14l3.600-3.300l2.600 6l2.300-1l-2.600-5.800l4.600-0.300z" fill="#cfd3d5"/></svg>
<svg style="left:28px;top:443px" width="4" height="4" viewBox="0 0 4 4"><path d="M4 0V4H0Z" fill="#d8d8d8"/></svg>
<svg style="left:8px;top:451px" width="22" height="20" viewBox="0 0 22 20"><path d="M10 2c2-1.500 4.500 0 3.800 2.600c-0.300 1.200 0.700 2 2.200 1.400c2.500-1 4.500 1.500 2.600 3.500c-1 1-3 0.500-4 1.500c-1 1.200 0.700 3 0 4.500c-1 2-3.800 1.600-4.500-0.300c-0.500-1.400-1.600-1.800-3-0.700c-1.800 1.500-5 2.500-6 0.300c-1-2.300 2.500-3 3.300-5c0.600-1.400-1.300-2.800-0.600-4.500c0.800-1.800 3.500-1.500 4.300 0c0.700 1 1.300-2.300 1.900-3.300z" fill="#6d6d6d" stroke="#cfd3d5" stroke-width="1.300"/></svg>
<svg style="left:28px;top:469px" width="4" height="4" viewBox="0 0 4 4"><path d="M4 0V4H0Z" fill="#d8d8d8"/></svg>
<svg style="left:9px;top:482px" width="20" height="19" viewBox="0 0 20 19"><path d="M6 18c-1-3-4-6-4.500-7.500c-0.400-1.200 1-1.800 2-0.800l2 2v-8c0-1.300 1.800-1.300 1.900 0l0.300 5v-7.200c0-1.300 1.900-1.300 2 0v7l0.500-6.300c0.100-1.300 1.900-1.200 1.900 0.100v6.700l0.900-4.800c0.200-1.200 1.900-1 1.800 0.300l-0.600 7.500c-0.200 2.500-1 4-1.700 6z" fill="#cfd3d5"/></svg>
<svg style="left:28px;top:498px" width="4" height="4" viewBox="0 0 4 4"><path d="M4 0V4H0Z" fill="#d8d8d8"/></svg>
<svg style="left:10px;top:507px" width="20" height="19" viewBox="0 0 20 19"><circle cx="7" cy="7" r="5.300" fill="#6a6a6a" stroke="#cfd3d5" stroke-width="1.600"/><path d="M11 11l6 6" stroke="#cfd3d5" stroke-width="2.800" stroke-linecap="round"/></svg>
<div style="left:5px;top:534px;width:7px;height:7px;background:#222;border:1px solid #ddd;box-sizing:border-box"></div>
<div style="left:8px;top:537px;width:7px;height:7px;background:#ddd;border:1px solid #555;box-sizing:border-box"></div>
<div style="left:5px;top:534px;width:6px;height:6px;background:#222;border:1px solid #ddd;box-sizing:border-box"></div>
<svg style="left:21px;top:531px" width="12" height="12" viewBox="0 0 12 12"><path d="M2.500 4h5c2 0 2.500 1 2.500 3v2.500" fill="none" stroke="#cfd3d5" stroke-width="1.300"/><path d="M0 4l3.500-3v6zM10 12l-3-3.500h6z" fill="#cfd3d5"/></svg>
<div style="left:15px;top:558px;width:19px;height:19px;background:#fff;border:1px solid #3a3a3a;box-sizing:border-box"></div>
<div style="left:4px;top:548px;width:20px;height:20px;background:#2c3c80;border:1px solid #3a3a3a;box-shadow:inset 0 0 0 1px #f2f2f2;box-sizing:border-box"></div>
<div style="left:10px;top:586px;width:17px;height:13px;border:1px solid #d6d6d6;background:#444;box-sizing:border-box"></div>
<svg style="left:13px;top:587px" width="11" height="11" viewBox="0 0 11 11"><circle cx="5.500" cy="5.500" r="3.600" fill="none" stroke="#e0e0e0" stroke-width="1" stroke-dasharray="1 1"/></svg>
<div style="left:10px;top:616px;width:12px;height:10px;border:1px solid #d6d6d6;background:#5c5c5c;box-sizing:border-box"></div>
<div style="left:15px;top:612px;width:13px;height:11px;border:1px solid #d6d6d6;background:#6e6a68;box-sizing:border-box"></div>
<svg style="left:28px;top:627px" width="4" height="4" viewBox="0 0 4 4"><path d="M4 0V4H0Z" fill="#d8d8d8"/></svg>
<!-- right icon strip -->
<div style="left:1549px;top:0px;width:16px;height:936px;background:#3b3b3b"></div>
<div style="left:1549px;top:0px;width:1px;height:936px;background:#333"></div>
<div style="left:1565px;top:0px;width:2px;height:936px;background:#2a2a2a"></div>
<div style="left:1567px;top:0px;width:37px;height:420px;background:#535353"></div>
<div style="left:1604px;top:0px;width:3px;height:420px;background:#2f2f2f"></div>
<div style="left:1567px;top:26px;width:37px;height:1px;background:#2e2e2e"></div>
<div style="left:1567px;top:27px;width:37px;height:1px;background:#6a6a6a"></div>
<div style="left:1567px;top:95px;width:37px;height:1px;background:#2e2e2e"></div>
<div style="left:1567px;top:96px;width:37px;height:1px;background:#6a6a6a"></div>
<div style="left:1567px;top:163px;width:37px;height:1px;background:#2e2e2e"></div>
<div style="left:1567px;top:164px;width:37px;height:1px;background:#6a6a6a"></div>
<div style="left:1567px;top:232px;width:37px;height:1px;background:#2e2e2e"></div>
<div style="left:1567px;top:233px;width:37px;height:1px;background:#6a6a6a"></div>
<div style="left:1576px;top:31px;width:20px;height:4px;background:repeating-linear-gradient(90deg,#2f2f2f 0 1px,transparent 1px 2px)"></div>
<div style="left:1576px;top:100px;width:20px;height:4px;background:repeating-linear-gradient(90deg,#2f2f2f 0 1px,transparent 1px 2px)"></div>
<div style="left:1576px;top:169px;width:20px;height:4px;background:repeating-linear-gradient(90deg,#2f2f2f 0 1px,transparent 1px 2px)"></div>
<svg style="left:1577px;top:0px" width="20" height="20" viewBox="0 0 20 20"><rect x="1.500" y="0.500" width="5" height="5" fill="none" stroke="#c4c8ca"/><rect x="1.500" y="6.500" width="5" height="5" fill="none" stroke="#c4c8ca"/><rect x="1" y="13" width="6" height="5" fill="#a9a7a3"/><path d="M11 2.500c5 2 5 8 1 13" fill="none" stroke="#c4c8ca" stroke-width="1.600"/><path d="M9 4.500l4-3.500l0.500 4.500z" fill="#c4c8ca"/></svg>
<svg style="left:1578px;top:40px" width="18" height="20" viewBox="0 0 18 20"><path d="M6 1.500l5 2.200v6l-5 2.500l-5-2.500v-6z" fill="#7a7a7a" stroke="#c4c8ca" stroke-width="1"/><path d="M1 3.700l5 2.300l5-2.300M6 6v6" fill="none" stroke="#c4c8ca" stroke-width="1"/><rect x="12.500" y="1.500" width="4" height="4" fill="#c4c8ca"/><rect x="12.500" y="7" width="4" height="4" fill="#c4c8ca"/><rect x="1" y="14" width="15.500" height="4" fill="#c4c8ca"/><path d="M11.500 15h4l-2 2.500z" fill="#222"/></svg>
<svg style="left:1578px;top:69px" width="18" height="18" viewBox="0 0 18 18"><circle cx="9" cy="9" r="8" fill="#c4c8ca"/><circle cx="9" cy="4.800" r="1.600" fill="#555"/><rect x="7.600" y="7.800" width="2.800" height="6.500" fill="#555"/></svg>
<svg style="left:1577px;top:108px" width="20" height="22" viewBox="0 0 20 22"><path d="M5 12h9l-0.700 8h-7.600z" fill="#a9a7a3"/><path d="M7 12L3 3M9.500 12V2M12 12l4-8" stroke="#c4c8ca" stroke-width="1.600"/><path d="M2 1.500l2.500 0.500l-0.500 3.500zM8.300 0.500h2.400v3h-2.400zM15 2.500l3 1l-2.500 2.500z" fill="#c4c8ca"/></svg>
<svg style="left:1576px;top:138px" width="22" height="20" viewBox="0 0 22 20"><path d="M1 3.500c4-2 7 0 8 1h11v1.600h-11c-2 1.500-5 1.500-8-2.600z" fill="#c4c8ca"/><path d="M1 11h13l5-3c1.500 2 1.500 6 0 8l-5-3.200h-13z" fill="#c4c8ca"/></svg>
<span class="t" style="left:1578px;top:176px;font:22px 'Liberation Sans',sans-serif;color:#c4c8ca;line-height:24px">A</span>
<div style="left:1592px;top:179px;width:1px;height:18px;background:#c4c8ca"></div>
<svg style="left:1579px;top:208px" width="14" height="17" viewBox="0 0 14 17"><path d="M11.500 1H5.500a4.600 4.600 0 0 0 0 9.200H7.500V16H8.700V2.200H10.300V16H11.500Z" fill="#c4c8ca"/></svg>
<!-- right panels -->
<div style="left:1607px;top:0px;width:313px;height:420px;background:#2f2f2f"></div>
<div style="left:1607px;top:0px;width:313px;height:3px;background:#3a3a3a"></div>
<div style="left:1644px;top:0px;width:36px;height:3px;background:#555"></div>
<div style="left:1607px;top:3px;width:313px;height:125px;background:repeating-conic-gradient(#474747 0 25%,#4f4f4f 0 50%) 0 0/2px 2px"></div>
<div style="left:1607px;top:3px;width:313px;height:1px;background:#6a6a6a"></div>
<div style="left:1895px;top:4px;width:10px;height:124px;background:#474747"></div>
<div style="left:1905px;top:4px;width:15px;height:124px;background:#3e3e3e"></div>
<div style="left:1607px;top:5px;width:11px;height:11px;background:#d82232"></div>
<div style="left:1619px;top:5px;width:11px;height:11px;background:#e5bb20"></div>
<div style="left:1631px;top:5px;width:11px;height:11px;background:#1ee045"></div>
<div style="left:1643px;top:5px;width:11px;height:11px;background:#4faad3"></div>
<div style="left:1655px;top:5px;width:11px;height:11px;background:#1f49c4"></div>
<div style="left:1667px;top:5px;width:11px;height:11px;background:#e05a82"></div>
<div style="left:1679px;top:5px;width:11px;height:11px;background:#ffffff"></div>
<div style="left:1691px;top:5px;width:11px;height:11px;background:#ebebeb"></div>
<div style="left:1703px;top:5px;width:11px;height:11px;background:#e4e6e6"></div>
<div style="left:1715px;top:5px;width:11px;height:11px;background:#dadddd"></div>
<div style="left:1727px;top:5px;width:11px;height:11px;background:#d3d3d3"></div>
<div style="left:1739px;top:5px;width:11px;height:11px;background:#cfd3d3"></div>
<div style="left:1751px;top:5px;width:11px;height:11px;background:#c5cbcd"></div>
<div style="left:1763px;top:5px;width:11px;height:11px;background:#b9c1c4"></div>
<div style="left:1775px;top:5px;width:11px;height:11px;background:#b3b1ae"></div>
<div style="left:1787px;top:5px;width:11px;height:11px;background:#a9a7a3"></div>
<div style="left:1799px;top:5px;width:11px;height:11px;background:#d82232"></div>
<div style="left:1811px;top:5px;width:11px;height:11px;background:#e5bb20"></div>
<div style="left:1823px;top:5px;width:11px;height:11px;background:#37b050"></div>
<div style="left:1835px;top:5px;width:11px;height:11px;background:#4faad3"></div>
<div style="left:1847px;top:5px;width:11px;height:11px;background:#1a2a9a"></div>
<div style="left:1859px;top:5px;width:11px;height:11px;background:#dc3550"></div>
<div style="left:1871px;top:5px;width:11px;height:11px;background:#a9a7a3"></div>
<div style="left:1883px;top:5px;width:11px;height:11px;background:#8f8d8b"></div>
<div style="left:1607px;top:17px;width:11px;height:11px;background:#817f7d"></div>
<div style="left:1619px;top:17px;width:11px;height:11px;background:#777574"></div>
<div style="left:1631px;top:17px;width:11px;height:11px;background:#6a6a6a"></div>
<div style="left:1643px;top:17px;width:11px;height:11px;background:#5a5a5a"></div>
<div style="left:1655px;top:17px;width:11px;height:11px;background:#474747"></div>
<div style="left:1667px;top:17px;width:11px;height:11px;background:#383838"></div>
<div style="left:1679px;top:17px;width:11px;height:11px;background:#1e1a1a"></div>
<div style="left:1691px;top:17px;width:11px;height:11px;background:#140a0a"></div>
<div style="left:1703px;top:17px;width:11px;height:11px;background:#ee9fa0"></div>
<div style="left:1715px;top:17px;width:11px;height:11px;background:#efae95"></div>
<div style="left:1727px;top:17px;width:11px;height:11px;background:#e5c9a5"></div>
<div style="left:1739px;top:17px;width:11px;height:11px;background:#f6eacb"></div>
<div style="left:1751px;top:17px;width:11px;height:11px;background:#e8cfad"></div>
<div style="left:1763px;top:17px;width:11px;height:11px;background:#d9d2c0"></div>
<div style="left:1775px;top:17px;width:11px;height:11px;background:#bcc7b4"></div>
<div style="left:1787px;top:17px;width:11px;height:11px;background:#a5d3ea"></div>
<div style="left:1799px;top:17px;width:11px;height:11px;background:#a3d0e8"></div>
<div style="left:1811px;top:17px;width:11px;height:11px;background:#8dbbd8"></div>
<div style="left:1823px;top:17px;width:11px;height:11px;background:#95afc0"></div>
<div style="left:1835px;top:17px;width:11px;height:11px;background:#a8a6a6"></div>
<div style="left:1847px;top:17px;width:11px;height:11px;background:#b4a5a5"></div>
<div style="left:1859px;top:17px;width:11px;height:11px;background:#d9a9ab"></div>
<div style="left:1871px;top:17px;width:11px;height:11px;background:#f0a9b0"></div>
<div style="left:1883px;top:17px;width:11px;height:11px;background:#f0a9b0"></div>
<div style="left:1607px;top:29px;width:11px;height:11px;background:#e2705f"></div>
<div style="left:1619px;top:29px;width:11px;height:11px;background:#e4906a"></div>
<div style="left:1631px;top:29px;width:11px;height:11px;background:#e6b045"></div>
<div style="left:1643px;top:29px;width:11px;height:11px;background:#efd670"></div>
<div style="left:1655px;top:29px;width:11px;height:11px;background:#d3c05a"></div>
<div style="left:1667px;top:29px;width:11px;height:11px;background:#7fc878"></div>
<div style="left:1679px;top:29px;width:11px;height:11px;background:#3ed060"></div>
<div style="left:1691px;top:29px;width:11px;height:11px;background:#45b8b0"></div>
<div style="left:1703px;top:29px;width:11px;height:11px;background:#4faad3"></div>
<div style="left:1715px;top:29px;width:11px;height:11px;background:#3f90d3"></div>
<div style="left:1727px;top:29px;width:11px;height:11px;background:#4a7cc8"></div>
<div style="left:1739px;top:29px;width:11px;height:11px;background:#3f62bb"></div>
<div style="left:1751px;top:29px;width:11px;height:11px;background:#9060a0"></div>
<div style="left:1763px;top:29px;width:11px;height:11px;background:#d86088"></div>
<div style="left:1775px;top:29px;width:11px;height:11px;background:#e8708f"></div>
<div style="left:1787px;top:29px;width:11px;height:11px;background:#e05a82"></div>
<div style="left:1799px;top:29px;width:11px;height:11px;background:#d82232"></div>
<div style="left:1811px;top:29px;width:11px;height:11px;background:#e06a2a"></div>
<div style="left:1823px;top:29px;width:11px;height:11px;background:#e5b030"></div>
<div style="left:1835px;top:29px;width:11px;height:11px;background:#e5bb20"></div>
<div style="left:1847px;top:29px;width:11px;height:11px;background:#a5cc30"></div>
<div style="left:1859px;top:29px;width:11px;height:11px;background:#30c850"></div>
<div style="left:1871px;top:29px;width:11px;height:11px;background:#38c058"></div>
<div style="left:1883px;top:29px;width:11px;height:11px;background:#45b890"></div>
<div style="left:1607px;top:41px;width:11px;height:11px;background:#4faad3"></div>
<div style="left:1619px;top:41px;width:11px;height:11px;background:#2a60d0"></div>
<div style="left:1631px;top:41px;width:11px;height:11px;background:#2050c0"></div>
<div style="left:1643px;top:41px;width:11px;height:11px;background:#1a2598"></div>
<div style="left:1655px;top:41px;width:11px;height:11px;background:#6a2a80"></div>
<div style="left:1667px;top:41px;width:11px;height:11px;background:#8c1c3c"></div>
<div style="left:1679px;top:41px;width:11px;height:11px;background:#dc3550"></div>
<div style="left:1691px;top:41px;width:11px;height:11px;background:#d82232"></div>
<div style="left:1703px;top:41px;width:11px;height:11px;background:#c02530"></div>
<div style="left:1715px;top:41px;width:11px;height:11px;background:#c43038"></div>
<div style="left:1727px;top:41px;width:11px;height:11px;background:#b07050"></div>
<div style="left:1739px;top:41px;width:11px;height:11px;background:#ddb525"></div>
<div style="left:1751px;top:41px;width:11px;height:11px;background:#6f9055"></div>
<div style="left:1763px;top:41px;width:11px;height:11px;background:#35a048"></div>
<div style="left:1775px;top:41px;width:11px;height:11px;background:#3c8048"></div>
<div style="left:1787px;top:41px;width:11px;height:11px;background:#4a7080"></div>
<div style="left:1799px;top:41px;width:11px;height:11px;background:#2860c8"></div>
<div style="left:1811px;top:41px;width:11px;height:11px;background:#2048b8"></div>
<div style="left:1823px;top:41px;width:11px;height:11px;background:#1a2a98"></div>
<div style="left:1835px;top:41px;width:11px;height:11px;background:#1a1a7a"></div>
<div style="left:1847px;top:41px;width:11px;height:11px;background:#40206a"></div>
<div style="left:1859px;top:41px;width:11px;height:11px;background:#80203a"></div>
<div style="left:1871px;top:41px;width:11px;height:11px;background:#c42235"></div>
<div style="left:1883px;top:41px;width:11px;height:11px;background:#c42235"></div>
<div style="left:1607px;top:53px;width:11px;height:11px;background:#7a1020"></div>
<div style="left:1619px;top:53px;width:11px;height:11px;background:#90203a"></div>
<div style="left:1631px;top:53px;width:11px;height:11px;background:#7a5548"></div>
<div style="left:1643px;top:53px;width:11px;height:11px;background:#a58540"></div>
<div style="left:1655px;top:53px;width:11px;height:11px;background:#4a4a4a"></div>
<div style="left:1667px;top:53px;width:11px;height:11px;background:#484848"></div>
<div style="left:1679px;top:53px;width:11px;height:11px;background:#404040"></div>
<div style="left:1691px;top:53px;width:11px;height:11px;background:#484848"></div>
<div style="left:1703px;top:53px;width:11px;height:11px;background:#3858b0"></div>
<div style="left:1715px;top:53px;width:11px;height:11px;background:#202e88"></div>
<div style="left:1727px;top:53px;width:11px;height:11px;background:#1a1e78"></div>
<div style="left:1739px;top:53px;width:11px;height:11px;background:#141460"></div>
<div style="left:1751px;top:53px;width:11px;height:11px;background:#38184c"></div>
<div style="left:1763px;top:53px;width:11px;height:11px;background:#4a1848"></div>
<div style="left:1775px;top:53px;width:11px;height:11px;background:#8c1c3c"></div>
<div style="left:1787px;top:53px;width:11px;height:11px;background:#7c1830"></div>
<div style="left:1799px;top:53px;width:11px;height:11px;background:#e8cfad"></div>
<div style="left:1811px;top:53px;width:11px;height:11px;background:#b8afa5"></div>
<div style="left:1823px;top:53px;width:11px;height:11px;background:#8c7060"></div>
<div style="left:1835px;top:53px;width:11px;height:11px;background:#705040"></div>
<div style="left:1847px;top:53px;width:11px;height:11px;background:#333333"></div>
<div style="left:1859px;top:53px;width:11px;height:11px;background:#d8b880"></div>
<div style="left:1871px;top:53px;width:11px;height:11px;background:#d0a850"></div>
<div style="left:1883px;top:53px;width:11px;height:11px;background:#7a5a48"></div>
<div style="left:1607px;top:65px;width:11px;height:11px;background:#7a5548"></div>
<div style="left:1619px;top:65px;width:11px;height:11px;background:#6a4030"></div>
<div style="left:1607px;top:128px;width:313px;height:1px;background:#6a6a6a"></div>
<div style="left:1607px;top:129px;width:313px;height:18px;background:#535353"></div>
<svg style="left:1850px;top:132px" width="12" height="12" viewBox="0 0 12 12"><path d="M1 1h10v10h-5l-5-5z" fill="#c4c8ca"/><path d="M1 6h5v5z" fill="#6a6a6a"/></svg>
<svg style="left:1879px;top:132px" width="12" height="13" viewBox="0 0 12 13"><path d="M1 3h10M4 3v-1.500h4V3" fill="none" stroke="#8e8e8e" stroke-width="1"/><path d="M2 4.500h8l-0.700 8h-6.600z" fill="none" stroke="#8e8e8e" stroke-width="1"/><path d="M4.500 6v5M6 6v5M7.500 6v5" stroke="#8e8e8e" stroke-width="0.800"/></svg>
<div style="left:1607px;top:150px;width:313px;height:18px;background:#3c3c3c"></div>
<div style="left:1607px;top:150px;width:38px;height:17px;background:#404040;border-right:1px solid #2c2c2c;box-sizing:border-box"></div><span class="t" style="left:1615px;top:153px;font:12px 'Liberation Sans',sans-serif;color:#b0b0b0;line-height:14px">调整</span>
<div style="left:1645px;top:150px;width:38px;height:17px;background:#535353;border-right:1px solid #2c2c2c;box-sizing:border-box"></div><span class="t" style="left:1653px;top:153px;font:12px 'Liberation Sans',sans-serif;color:#e6e6e6;line-height:14px">样式</span>
<svg style="left:1901px;top:153px" width="16" height="10" viewBox="0 0 16 10"><path d="M0 3h6l-3 3.500z" fill="#d0d0d0"/><path d="M7 1.500h9M7 4.500h9M7 7.500h9" stroke="#d0d0d0" stroke-width="1.200"/></svg>
<div style="left:1607px;top:167px;width:313px;height:1px;background:#6a6a6a"></div>
<div style="left:1607px;top:168px;width:313px;height:125px;background:#4e4e4e"></div>
<div style="left:1894px;top:169px;width:11px;height:124px;background:#4b4b4b;border-left:1px solid #3a3a3a;box-sizing:border-box"></div>
<div style="left:1905px;top:168px;width:15px;height:125px;background:#404040"></div>
<div style="left:1607px;top:169px;width:32px;height:32px;background:#3a3a3a"></div>
<div style="left:1638px;top:169px;width:1px;height:124px;background:repeating-linear-gradient(180deg,#2e2e2e 0 1px,#4e4e4e 1px 2px)"></div>
<div style="left:1670px;top:169px;width:1px;height:124px;background:repeating-linear-gradient(180deg,#2e2e2e 0 1px,#4e4e4e 1px 2px)"></div>
<div style="left:1702px;top:169px;width:1px;height:124px;background:repeating-linear-gradient(180deg,#2e2e2e 0 1px,#4e4e4e 1px 2px)"></div>
<div style="left:1734px;top:169px;width:1px;height:124px;background:repeating-linear-gradient(180deg,#2e2e2e 0 1px,#4e4e4e 1px 2px)"></div>
<div style="left:1766px;top:169px;width:1px;height:124px;background:repeating-linear-gradient(180deg,#2e2e2e 0 1px,#4e4e4e 1px 2px)"></div>
<div style="left:1798px;top:169px;width:1px;height:124px;background:repeating-linear-gradient(180deg,#2e2e2e 0 1px,#4e4e4e 1px 2px)"></div>
<div style="left:1830px;top:169px;width:1px;height:124px;background:repeating-linear-gradient(180deg,#2e2e2e 0 1px,#4e4e4e 1px 2px)"></div>
<div style="left:1862px;top:169px;width:1px;height:124px;background:repeating-linear-gradient(180deg,#2e2e2e 0 1px,#4e4e4e 1px 2px)"></div>
<div style="left:1894px;top:169px;width:1px;height:124px;background:repeating-linear-gradient(180deg,#2e2e2e 0 1px,#4e4e4e 1px 2px)"></div>
<div style="left:1607px;top:200px;width:287px;height:1px;background:repeating-linear-gradient(90deg,#2e2e2e 0 1px,#4e4e4e 1px 2px)"></div>
<div style="left:1607px;top:232px;width:287px;height:1px;background:repeating-linear-gradient(90deg,#2e2e2e 0 1px,#4e4e4e 1px 2px)"></div>
<div style="left:1607px;top:264px;width:287px;height:1px;background:repeating-linear-gradient(90deg,#2e2e2e 0 1px,#4e4e4e 1px 2px)"></div>
<div style="left:1615px;top:177px;width:15px;height:15px;background:#fff;box-sizing:border-box"></div><svg style="left:1612px;top:176px" width="22" height="22" viewBox="0 0 22 22"><path d="M1 2l20 17" stroke="#d82232" stroke-width="2"/></svg>
<div style="left:1647px;top:177px;width:15px;height:15px;background:radial-gradient(circle,#e5bb20 0 3.500px,#d82232 4px);border:1px solid #111;box-shadow:1px 2px 2px rgba(0,0,0,.6);box-sizing:border-box"></div>
<div style="left:1674px;top:172px;width:25px;height:25px;border:2px solid #e6d8c8;border-radius:6px;box-sizing:border-box;background:#4a4a4a;box-shadow:inset 0 0 0 1px #4a4a4a, inset 0 0 0 2px #cbb9a6"></div>
<div style="left:1711px;top:177px;width:15px;height:15px;background:radial-gradient(circle at 45% 45%,#111 0 3px,#6a6a6a 4px,#1a1a1a 7px);box-shadow:1px 2px 2px rgba(0,0,0,.6);box-sizing:border-box"></div>
<div style="left:1743px;top:177px;width:15px;height:15px;background:linear-gradient(160deg,#cfe4ee 0 25%,#2f6fd0 40%,#1f49c4);box-sizing:border-box"></div>
<div style="left:1775px;top:177px;width:15px;height:15px;background:#a9a7a3;box-sizing:border-box"></div>
<div style="left:1807px;top:177px;width:15px;height:15px;background:linear-gradient(135deg,#3a3a3a 0 45%,#8a8a8a 50%,#a8a8a8);border:2px solid #3c3c3c;border-right-color:#9a9a9a;border-bottom-color:#9a9a9a;box-sizing:border-box"></div>
<div style="left:1839px;top:177px;width:15px;height:15px;background:#8a5a48;box-sizing:border-box"></div>
<div style="left:1871px;top:177px;width:15px;height:15px;background:linear-gradient(#6b4a38 0 40%,#8a6a58 40%);box-sizing:border-box"></div>
<div style="left:1615px;top:209px;width:15px;height:15px;background:linear-gradient(#d82232 0 35%,#a9a7a3 35% 55%,#d82232 55%);box-sizing:border-box"></div>
<div style="left:1647px;top:209px;width:15px;height:15px;background:linear-gradient(135deg,#111 0 20%,#2a60d0 20% 35%,#e05a82 35% 50%,#111 50% 60%,#e5bb20 60% 80%,#a58540 80%);box-sizing:border-box"></div>
<div style="left:1679px;top:209px;width:15px;height:15px;background:linear-gradient(135deg,#e5bb20 0 40%,#7a5548 40% 65%,#e5bb20 65%);box-sizing:border-box"></div>
<div style="left:1711px;top:209px;width:15px;height:15px;background:linear-gradient(#8a6a58 0 20%,#e07a70 20% 50%,#e5a040 50% 90%,#7a5548 90%);box-sizing:border-box"></div>
<div style="left:1743px;top:209px;width:15px;height:15px;background:#a8d0e8;border:1px solid #c8e0ee;box-sizing:border-box"></div>
<div style="left:1775px;top:209px;width:15px;height:15px;background:linear-gradient(#8fc6e6 0 20%,#cfe4ee 20% 55%,#6b4a38 55% 80%,#c02530 80%);box-shadow:1px 2px 2px rgba(0,0,0,.6);box-sizing:border-box"></div>
<div style="left:1807px;top:209px;width:15px;height:15px;background:repeating-conic-gradient(#e8e8e8 0 25%,#8a8a8a 0 50%) 0 0/3px 3px;box-sizing:border-box"></div>
<div style="left:1839px;top:209px;width:15px;height:15px;background:linear-gradient(#d890a0 0 20%,#2a50c0 20% 80%,#c02530 80%);box-shadow:3px 4px 2px rgba(0,0,0,.700);box-sizing:border-box"></div>
<div style="left:1871px;top:208px;width:16px;height:18px;border-right:1px solid #333;border-bottom:1px solid #333;box-sizing:border-box"></div>
<div style="left:1614px;top:240px;width:17px;height:17px;border:1px solid #303030;border-radius:2px;background:#505050;box-sizing:border-box"></div>
<div style="left:1646px;top:240px;width:17px;height:17px;border:1px solid #303030;border-radius:2px;background:#505050;box-sizing:border-box"></div>
<div style="left:1679px;top:241px;width:15px;height:15px;background:repeating-linear-gradient(90deg,#8a6050 0 2px,#7a5a52 2px 3px);border-radius:2px;box-shadow:0 0 3px 1px rgba(0,0,0,.45);box-sizing:border-box"></div>
<div style="left:1711px;top:241px;width:15px;height:15px;background:radial-gradient(#e5bb20 0.900px,transparent 1.100px) 1px 1px/3px 3px,#8a6850;border:2px solid #8a6850;box-shadow:1px 2px 2px rgba(0,0,0,.6);box-sizing:border-box"></div>
<div style="left:1743px;top:241px;width:15px;height:15px;background:radial-gradient(#e5bb20 1px,transparent 1.200px) 0 0/2.500px 2.500px,#9a8060;box-shadow:1px 2px 2px rgba(0,0,0,.6);box-sizing:border-box"></div>
<div style="left:1775px;top:241px;width:15px;height:15px;background:#e5cfb0;border-radius:2px;box-shadow:1px 2px 2px rgba(0,0,0,.6);box-sizing:border-box"></div>
<div style="left:1807px;top:241px;width:15px;height:15px;background:repeating-linear-gradient(45deg,#e5bb20 0 2px,#d8c060 2px 3px);box-shadow:1px 2px 2px rgba(0,0,0,.6);box-sizing:border-box"></div>
<div style="left:1839px;top:241px;width:15px;height:15px;background:#c8b8a5;box-sizing:border-box"></div>
<div style="left:1871px;top:241px;width:15px;height:15px;background:radial-gradient(circle,#fff 0 2px,#555 7px);border:2px solid #eee;box-shadow:1px 2px 2px rgba(0,0,0,.6);box-sizing:border-box"></div>
<div style="left:1615px;top:273px;width:15px;height:15px;background:radial-gradient(circle,#fff 0 2px,#c8a890 4px,#1a1010 7px);border:1px solid #888;box-shadow:1px 2px 2px rgba(0,0,0,.6);box-sizing:border-box"></div>
<div style="left:1647px;top:273px;width:15px;height:15px;background:radial-gradient(circle,#fff 0 3px,#c8c0b8 7px);border:1px solid #eee;box-shadow:1px 2px 2px rgba(0,0,0,.6);box-sizing:border-box"></div>
<div style="left:1679px;top:273px;width:15px;height:15px;background:radial-gradient(circle,#fff 0 1.500px,#888 3px,#111 6px);border:1px solid #ccc;border-bottom:3px solid #140a0a;box-sizing:border-box"></div>
<div style="left:1711px;top:273px;width:15px;height:15px;background:radial-gradient(circle,#fff 0 2px,#e890a0 4px,#888 7px);border:1px solid #ccc;border-bottom:3px solid #140a0a;box-sizing:border-box"></div>
<div style="left:1743px;top:273px;width:15px;height:15px;background:radial-gradient(circle,#8fd0f0 0 2px,#2a60d0 4px,#111 6px);border:2px solid #ddd;box-shadow:1px 2px 2px rgba(0,0,0,.6);box-sizing:border-box"></div>
<div style="left:1775px;top:273px;width:15px;height:15px;background:linear-gradient(#8fc6e6 0 45%,#111 45%);border:2px solid #1a2a9a;border-top-color:#a8d0e8;box-sizing:border-box"></div>
<div style="left:1807px;top:273px;width:15px;height:15px;background:radial-gradient(circle,#fff 0 3px,#a8a8a8 6px);border:2px solid #aaa;border-bottom:3px solid #222;box-sizing:border-box"></div>
<div style="left:1839px;top:273px;width:15px;height:15px;background:#fff;border-radius:2px;border-bottom:2px solid #aaa;border-right:1px solid #aaa;box-shadow:1px 2px 2px rgba(0,0,0,.6);box-sizing:border-box"></div>
<div style="left:1871px;top:273px;width:15px;height:15px;background:linear-gradient(#eee 0 15%,#333 15% 50%,#5a5a5a 50%);border:1px solid #222;box-shadow:1px 2px 2px rgba(0,0,0,.6);box-sizing:border-box"></div>
<div style="left:1607px;top:293px;width:313px;height:1px;background:#6a6a6a"></div>
<div style="left:1607px;top:294px;width:313px;height:17px;background:#535353"></div>
<svg style="left:1818px;top:297px" width="12" height="12" viewBox="0 0 12 12"><circle cx="6" cy="6" r="4.800" fill="none" stroke="#8e8e8e" stroke-width="1.200"/><path d="M2.800 2.800l6.400 6.400" stroke="#8e8e8e" stroke-width="1.200"/></svg>
<svg style="left:1850px;top:297px" width="12" height="12" viewBox="0 0 12 12"><path d="M1 1h10v10h-5l-5-5z" fill="#c4c8ca"/><path d="M1 6h5v5z" fill="#6a6a6a"/></svg>
<svg style="left:1879px;top:297px" width="12" height="13" viewBox="0 0 12 13"><path d="M1 3h10M4 3v-1.500h4V3" fill="none" stroke="#8e8e8e" stroke-width="1"/><path d="M2 4.500h8l-0.700 8h-6.600z" fill="none" stroke="#8e8e8e" stroke-width="1"/><path d="M4.500 6v5M6 6v5M7.500 6v5" stroke="#8e8e8e" stroke-width="0.800"/></svg>
<div style="left:1607px;top:314px;width:313px;height:18px;background:#3c3c3c"></div>
<div style="left:1607px;top:314px;width:38px;height:17px;background:#535353;border-right:1px solid #2c2c2c;box-sizing:border-box"></div><span class="t" style="left:1615px;top:317px;font:12px 'Liberation Sans',sans-serif;color:#e6e6e6;line-height:14px">图层</span>
<div style="left:1645px;top:314px;width:37px;height:17px;background:#404040;border-right:1px solid #2c2c2c;box-sizing:border-box"></div><span class="t" style="left:1653px;top:317px;font:12px 'Liberation Sans',sans-serif;color:#b0b0b0;line-height:14px">通道</span>
<div style="left:1682px;top:314px;width:38px;height:17px;background:#404040;border-right:1px solid #2c2c2c;box-sizing:border-box"></div><span class="t" style="left:1690px;top:317px;font:12px 'Liberation Sans',sans-serif;color:#b0b0b0;line-height:14px">路径</span>
<svg style="left:1901px;top:318px" width="16" height="10" viewBox="0 0 16 10"><path d="M0 3h6l-3 3.500z" fill="#d0d0d0"/><path d="M7 1.500h9M7 4.500h9M7 7.500h9" stroke="#d0d0d0" stroke-width="1.200"/></svg>
<div style="left:1607px;top:331px;width:313px;height:84px;background:#535353"></div>
<div style="left:1607px;top:358px;width:313px;height:1px;background:#474747"></div>
<div style="left:1607px;top:359px;width:313px;height:1px;background:#5e5e5e"></div>
<div style="left:1607px;top:386px;width:313px;height:1px;background:#474747"></div>
<div style="left:1607px;top:387px;width:313px;height:1px;background:#5e5e5e"></div>
<div style="left:1612px;top:335px;width:69px;height:19px;background:#616161;border:1px solid #454545;border-radius:3px;box-sizing:border-box"></div>
<svg style="left:1617px;top:339px" width="12" height="12" viewBox="0 0 12 12"><circle cx="6.500" cy="4.500" r="3" fill="none" stroke="#c8c8c8" stroke-width="1.200"/><path d="M4.500 7l-3 3.500" stroke="#c8c8c8" stroke-width="1.400"/></svg>
<span class="t" style="left:1633px;top:337px;font:12px 'Liberation Sans',sans-serif;color:#d8d8d8;line-height:14px">类型</span>
<svg style="left:1671px;top:340px" width="6" height="10" viewBox="0 0 6 10"><path d="M3 0l3 4h-6zM3 10l3-4h-6z" fill="#d0d0d0"/></svg>
<svg style="left:1703px;top:338px" width="14" height="12" viewBox="0 0 14 12"><rect x="0.500" y="0.500" width="13" height="10.500" fill="none" stroke="#8e8e8e" stroke-dasharray="1.500 1"/><path d="M2 9l3-3l2 2l2-1.500l3 2.500z" fill="#8e8e8e"/></svg>
<svg style="left:1727px;top:338px" width="12" height="12" viewBox="0 0 12 12"><circle cx="6" cy="6" r="5" fill="none" stroke="#8e8e8e" stroke-width="1.200"/><path d="M6 1a5 5 0 0 0-3.500 8.500z" fill="#8e8e8e"/></svg>
<span class="t" style="left:1752px;top:335px;font:15px 'Liberation Serif',serif;color:#8e8e8e;line-height:17px">T</span>
<svg style="left:1776px;top:338px" width="12" height="12" viewBox="0 0 12 12"><rect x="1.500" y="1.500" width="9" height="9" fill="none" stroke="#8e8e8e"/><rect x="0" y="0" width="3" height="3" fill="#8e8e8e"/><rect x="9" y="0" width="3" height="3" fill="#8e8e8e"/><rect x="0" y="9" width="3" height="3" fill="#8e8e8e"/><rect x="9" y="9" width="3" height="3" fill="#8e8e8e"/></svg>
<svg style="left:1799px;top:337px" width="14" height="14" viewBox="0 0 14 14"><path d="M4 1.500h5l3 3v8h-8z" fill="none" stroke="#8e8e8e"/><rect x="1" y="7" width="5" height="6" fill="#8e8e8e"/></svg>
<div style="left:1834px;top:336px;width:9px;height:8px;background:#7a7a7a"></div>
<div style="left:1834px;top:345px;width:9px;height:8px;background:#464646"></div>
<div style="left:1612px;top:363px;width:109px;height:19px;background:#616161;border:1px solid #454545;border-radius:3px;box-sizing:border-box"></div>
<span class="t" style="left:1619px;top:365px;font:12px 'Liberation Sans',sans-serif;color:#c8c8c8;line-height:14px">穿透</span>
<svg style="left:1711px;top:368px" width="6" height="10" viewBox="0 0 6 10"><path d="M3 0l3 4h-6zM3 10l3-4h-6z" fill="#d0d0d0"/></svg>
<span class="t" style="left:1730px;top:365px;font:12px 'Liberation Sans',sans-serif;color:#c8c8c8;line-height:14px">不透明度:</span>
<div style="left:1788px;top:363px;width:54px;height:19px;background:#484848;border:1px solid #414141;box-sizing:border-box"></div>
<div style="left:1823px;top:364px;width:18px;height:17px;background:#565656"></div>
<span class="t" style="left:1791px;top:366px;font:11px 'Liberation Sans',sans-serif;color:#6e6e6e;line-height:13px">100%</span>
<svg style="left:1829px;top:371px" width="6" height="4" viewBox="0 0 6 4"><path d="M0 0h6l-3 3.500z" fill="#b0b0b0"/></svg>
<span class="t" style="left:1614px;top:393px;font:12px 'Liberation Sans',sans-serif;color:#c8c8c8;line-height:14px">锁定:</span>
<div style="left:1651px;top:396px;width:11px;height:11px;background:repeating-conic-gradient(#9a9a9a 0 25%,#6a6a6a 0 50%) 0 0/4px 4px"></div>
<svg style="left:1671px;top:392px" width="17" height="16" viewBox="0 0 17 16"><path d="M15.500 1.500l-8 8" stroke="#9a9a9a" stroke-width="1.600" stroke-linecap="round"/><path d="M1 13.500c3 0 2.500-3 5.500-3c1.500 0.500 1.500 2 0.500 3c-2 1.200-4 0.600-6 0z" fill="#9a9a9a"/></svg>
<svg style="left:1694px;top:394px" width="13" height="13" viewBox="0 0 13 13"><path d="M6.500 1v11M1 6.500h11" stroke="#9a9a9a" stroke-width="1.100"/><path d="M6.500 0l2 2.500h-4zM6.500 13l2-2.500h-4zM0 6.500l2.500-2v4zM13 6.500l-2.500-2v4z" fill="#9a9a9a"/></svg>
<svg style="left:1718px;top:393px" width="11" height="14" viewBox="0 0 11 14"><path d="M2.500 6v-2a3 3 0 0 1 6 0v2" fill="none" stroke="#8e8e8e" stroke-width="1.400"/><rect x="0.500" y="6" width="10" height="7" fill="#8e8e8e"/></svg>
<span class="t" style="left:1754px;top:393px;font:12px 'Liberation Sans',sans-serif;color:#c8c8c8;line-height:14px">填充:</span>
<div style="left:1788px;top:391px;width:54px;height:19px;background:#484848;border:1px solid #414141;box-sizing:border-box"></div>
<div style="left:1823px;top:392px;width:18px;height:17px;background:#565656"></div>
<span class="t" style="left:1791px;top:394px;font:11px 'Liberation Sans',sans-serif;color:#6e6e6e;line-height:13px">100%</span>
<svg style="left:1829px;top:399px" width="6" height="4" viewBox="0 0 6 4"><path d="M0 0h6l-3 3.500z" fill="#b0b0b0"/></svg>
<span class="t" style="left:1748px;top:7px;font:12px 'Liberation Sans',sans-serif;color:#f8f8f8;line-height:15px;letter-spacing:-0.300px;text-shadow:1px 0 0 #333,-1px 0 0 #333,0 1px 0 #333,0 -1px 0 #333">思缘设计论坛</span>
<span class="t" style="left:1824px;top:12px;font:bold 10px 'Liberation Sans',sans-serif;color:#e8e4dc;line-height:11px;transform:scale(0.800,0.950);transform-origin:0 0;text-shadow:1px 0 0 #333,-1px 0 0 #333,0 1px 0 #333,0 -1px 0 #333">WWW.MISSYUAN.COM</span>
<!-- colour picker dialog -->
<div style="left:712px;top:473px;width:577px;height:363px;background:linear-gradient(90deg,#f1dad2 0,#efd9d0 110px,#e9b4b4 135px,#e4a8aa 230px,#bda89e 255px,#b0a599 300px,#b0a59a 465px,#c9bbac 485px,#ecdacc 500px,#f0ddd2 100%);border:1px solid #3b3532;border-radius:7px;box-sizing:border-box;box-shadow:0 0 0 1px rgba(255,255,255,.35) inset,0 3px 8px 1px rgba(0,0,0,.62)"></div>
<div style="left:713px;top:503px;width:7px;height:331px;background:linear-gradient(#f0d8d0 0,#e8c8c0 60px,#e2b0b0 90px,#d8c4b0 200px,#d2bca8 220px,#a6a29e 230px,#a6a29e 290px,#dcc6a8 300px)"></div>
<div style="left:1281px;top:503px;width:7px;height:331px;background:linear-gradient(#f0ddd2,#e6cdb4 120px,#dcc6a8 200px)"></div>
<div style="left:718px;top:827px;width:565px;height:7px;background:#dcc6a8;border-radius:0 0 5px 5px"></div>
<span class="t" style="left:720px;top:480px;font:12px 'Liberation Sans',sans-serif;color:#000;line-height:14px;text-shadow:0 0 6px #fff,0 0 6px #fff,0 0 3px #fff">拾色器 ( 叠加颜色 )</span>
<div style="left:1235px;top:474px;width:46px;height:18px;background:linear-gradient(#e9a9a4 0,#dc7a78 45%,#cf3a40 50%,#d8505a 80%,#e58a80 100%);border:1px solid #7a4a44;border-top:none;border-radius:0 0 4px 4px;box-sizing:border-box;box-shadow:inset 0 0 0 1px rgba(255,255,255,.35)"></div><svg style="left:1252px;top:477px" width="13" height="11" viewBox="0 0 13 11"><path d="M3 2.500l7 6M10 2.500l-7 6" stroke="#5a4a4a" stroke-width="4.200" stroke-linecap="square"/><path d="M3 2.500l7 6M10 2.500l-7 6" stroke="#fff" stroke-width="2.600" stroke-linecap="square"/></svg>
<div style="left:719px;top:502px;width:563px;height:326px;background:#ececec;border:1px solid #7c746c;box-sizing:border-box"></div>
<div style="left:730px;top:533px;width:260px;height:259px;background:#a3aeb3"></div>
<div style="left:732px;top:535px;width:256px;height:256px;background:linear-gradient(to top,#100808 0,rgba(16,8,8,.93) 14%,rgba(16,8,8,0) 100%),linear-gradient(to right,#fff 0,#f4e4e4 9%,#f0c6ca 22%,#e99aa6 36%,#e05a82 54%,#db3550 68%,#d82232 80%,#d82232 100%)"></div>
<div style="left:802px;top:547px;width:11px;height:11px;border:1px solid #222;border-radius:50%;box-sizing:border-box"></div>
<div style="left:1000px;top:533px;width:23px;height:259px;background:#a3aeb3"></div>
<div style="left:1002px;top:535px;width:19px;height:256px;background:linear-gradient(#d82232 0,#d82232 6%,#e05a82 8%,#e05a82 19%,#8c3c80 22%,#1f49c4 27%,#1f49c4 40%,#4faad3 44%,#4faad3 57%,#1ee045 61%,#1ee045 73%,#a5cc30 77%,#e5bb20 80%,#e5bb20 90%,#e06a2a 93%,#d82232 96%,#d82232 100%)"></div>
<svg style="left:990px;top:535px" width="9" height="11" viewBox="0 0 9 11"><path d="M1 1h3.500l3.500 4.500l-3.500 4.500h-3.500z" fill="#fff" stroke="#444" stroke-width="1"/></svg>
<svg style="left:1023px;top:535px" width="9" height="11" viewBox="0 0 9 11"><path d="M8 1h-3.500l-3.500 4.500l3.500 4.500h3.500z" fill="#fff" stroke="#444" stroke-width="1"/></svg>
<span class="t" style="left:1052px;top:521px;font:12px 'Liberation Sans',sans-serif;color:#000;line-height:14px">新的</span>
<div style="left:1035px;top:538px;width:61px;height:68px;background:#e8a5a9;border:1px solid #111;box-sizing:border-box"></div>
<span class="t" style="left:1052px;top:609px;font:12px 'Liberation Sans',sans-serif;color:#000;line-height:14px">当前</span>
<svg style="left:1103px;top:575px" width="14" height="14" viewBox="0 0 14 14"><path d="M7 1l5.500 2.500v6.500l-5.500 3l-5.500-3v-6.500z" fill="#9a9a9a" stroke="#444" stroke-width="1"/><path d="M1.500 3.500l5.500 2.500l5.500-2.500M7 6v7" fill="none" stroke="#444" stroke-width="1"/><path d="M7 1l5.500 2.500l-5.500 2.500l-5.500-2.500z" fill="#d8d8d8" stroke="#444"/></svg>
<div style="left:1104px;top:591px;width:14px;height:14px;background:#e9a0a8;border:1px solid #777;box-shadow:inset 0 0 0 1px #fff;box-sizing:border-box"></div>
<div style="left:1156px;top:514px;width:113px;height:18px;background:linear-gradient(#eaf5fb 0,#d6eef9 45%,#bfe4f6 50%,#b4def3 100%);border:1px solid #3c96d6;box-shadow:inset 0 0 0 1px #5fc4f2, inset 0 0 0 2px rgba(255,255,255,.6);border-radius:3px;box-sizing:border-box"></div><span class="t" style="left:1156px;top:518px;width:113px;text-align:center;font:12px 'Liberation Sans',sans-serif;color:#000;line-height:14px">确定</span>
<div style="left:1156px;top:542px;width:113px;height:18px;background:linear-gradient(#f4f4f4 0,#ececec 45%,#dcdcdc 50%,#d2d2d2 100%);border:1px solid #707070;box-shadow:inset 0 0 0 1px #fbfbfb;border-radius:3px;box-sizing:border-box"></div><span class="t" style="left:1156px;top:546px;width:113px;text-align:center;font:12px 'Liberation Sans',sans-serif;color:#000;line-height:14px">复位</span>
<div style="left:1156px;top:577px;width:113px;height:18px;background:linear-gradient(#f4f4f4 0,#ececec 45%,#dcdcdc 50%,#d2d2d2 100%);border:1px solid #707070;box-shadow:inset 0 0 0 1px #fbfbfb;border-radius:3px;box-sizing:border-box"></div><span class="t" style="left:1156px;top:581px;width:113px;text-align:center;font:12px 'Liberation Sans',sans-serif;color:#000;line-height:14px">添加到色板</span>
<div style="left:1156px;top:612px;width:113px;height:18px;background:linear-gradient(#f4f4f4 0,#ececec 45%,#dcdcdc 50%,#d2d2d2 100%);border:1px solid #707070;box-shadow:inset 0 0 0 1px #fbfbfb;border-radius:3px;box-sizing:border-box"></div><span class="t" style="left:1156px;top:616px;width:113px;text-align:center;font:12px 'Liberation Sans',sans-serif;color:#000;line-height:14px">颜色库</span>
<div style="left:1034px;top:650px;width:12px;height:12px;border-radius:50%;border:1px solid #8e8f8f;background:radial-gradient(circle at 50% 40%,#fdfdfd 0 2px,#d8d8d8 6px);box-sizing:border-box"></div><div style="left:1037px;top:653px;width:6px;height:6px;border-radius:50%;background:radial-gradient(circle at 40% 35%,#9fd8f8 0 1px,#1c6cc0 3px)"></div>
<span class="t" style="left:1050px;top:649px;font:13px 'Liberation Sans',sans-serif;color:#000;line-height:15px">H:</span>
<div style="left:1075px;top:646px;width:45px;height:20px;background:#fff;border:1px solid #d3d7db;border-top-color:#abadb3;box-sizing:border-box"></div><span class="t" style="left:1080px;top:649px;font:13px 'Liberation Sans',sans-serif;color:#000;line-height:15px">353</span>
<span class="t" style="left:1123px;top:649px;font:12px 'Liberation Sans',sans-serif;color:#000;line-height:14px">度</span>
<div style="left:1034px;top:674px;width:12px;height:12px;border-radius:50%;border:1px solid #8e8f8f;background:radial-gradient(circle at 50% 40%,#fdfdfd 0 2px,#d8d8d8 6px);box-sizing:border-box"></div>
<span class="t" style="left:1050px;top:673px;font:13px 'Liberation Sans',sans-serif;color:#000;line-height:15px">S:</span>
<div style="left:1075px;top:670px;width:45px;height:20px;background:#fff;border:1px solid #d3d7db;border-top-color:#abadb3;box-sizing:border-box"></div><span class="t" style="left:1080px;top:673px;font:13px 'Liberation Sans',sans-serif;color:#000;line-height:15px">29</span>
<span class="t" style="left:1123px;top:673px;font:13px 'Liberation Sans',sans-serif;color:#000;line-height:15px">%</span>
<div style="left:1034px;top:698px;width:12px;height:12px;border-radius:50%;border:1px solid #8e8f8f;background:radial-gradient(circle at 50% 40%,#fdfdfd 0 2px,#d8d8d8 6px);box-sizing:border-box"></div>
<span class="t" style="left:1050px;top:697px;font:13px 'Liberation Sans',sans-serif;color:#000;line-height:15px">B:</span>
<div style="left:1075px;top:694px;width:45px;height:20px;background:#fff;border:1px solid #d3d7db;border-top-color:#abadb3;box-sizing:border-box"></div><span class="t" style="left:1080px;top:697px;font:13px 'Liberation Sans',sans-serif;color:#000;line-height:15px">94</span>
<span class="t" style="left:1123px;top:697px;font:13px 'Liberation Sans',sans-serif;color:#000;line-height:15px">%</span>
<div style="left:1034px;top:726px;width:12px;height:12px;border-radius:50%;border:1px solid #8e8f8f;background:radial-gradient(circle at 50% 40%,#fdfdfd 0 2px,#d8d8d8 6px);box-sizing:border-box"></div>
<span class="t" style="left:1050px;top:725px;font:13px 'Liberation Sans',sans-serif;color:#000;line-height:15px">R:</span>
<div style="left:1075px;top:722px;width:45px;height:20px;background:#fff;border:1px solid #d3d7db;border-top-color:#abadb3;box-sizing:border-box"></div><div style="left:1079px;top:725px;width:23px;height:14px;background:#3a8fd9"></div><span class="t" style="left:1080px;top:725px;font:13px 'Liberation Sans',sans-serif;color:#fff;line-height:15px">239</span>
<div style="left:1034px;top:750px;width:12px;height:12px;border-radius:50%;border:1px solid #8e8f8f;background:radial-gradient(circle at 50% 40%,#fdfdfd 0 2px,#d8d8d8 6px);box-sizing:border-box"></div>
<span class="t" style="left:1050px;top:749px;font:13px 'Liberation Sans',sans-serif;color:#000;line-height:15px">G:</span>
<div style="left:1075px;top:746px;width:45px;height:20px;background:#fff;border:1px solid #d3d7db;border-top-color:#abadb3;box-sizing:border-box"></div><span class="t" style="left:1080px;top:749px;font:13px 'Liberation Sans',sans-serif;color:#000;line-height:15px">169</span>
<div style="left:1034px;top:774px;width:12px;height:12px;border-radius:50%;border:1px solid #8e8f8f;background:radial-gradient(circle at 50% 40%,#fdfdfd 0 2px,#d8d8d8 6px);box-sizing:border-box"></div>
<span class="t" style="left:1050px;top:773px;font:13px 'Liberation Sans',sans-serif;color:#000;line-height:15px">B:</span>
<div style="left:1075px;top:770px;width:45px;height:20px;background:#fff;border:1px solid #d3d7db;border-top-color:#abadb3;box-sizing:border-box"></div><span class="t" style="left:1080px;top:773px;font:13px 'Liberation Sans',sans-serif;color:#000;line-height:15px">177</span>
<div style="left:1169px;top:650px;width:12px;height:12px;border-radius:50%;border:1px solid #8e8f8f;background:radial-gradient(circle at 50% 40%,#fdfdfd 0 2px,#d8d8d8 6px);box-sizing:border-box"></div>
<span class="t" style="left:1185px;top:649px;font:13px 'Liberation Sans',sans-serif;color:#000;line-height:15px">L:</span>
<div style="left:1209px;top:646px;width:56px;height:20px;background:#fff;border:1px solid #d3d7db;border-top-color:#abadb3;box-sizing:border-box"></div><span class="t" style="left:1214px;top:649px;font:13px 'Liberation Sans',sans-serif;color:#000;line-height:15px">76</span>
<div style="left:1169px;top:674px;width:12px;height:12px;border-radius:50%;border:1px solid #8e8f8f;background:radial-gradient(circle at 50% 40%,#fdfdfd 0 2px,#d8d8d8 6px);box-sizing:border-box"></div>
<span class="t" style="left:1185px;top:673px;font:13px 'Liberation Sans',sans-serif;color:#000;line-height:15px">a:</span>
<div style="left:1209px;top:670px;width:56px;height:20px;background:#fff;border:1px solid #d3d7db;border-top-color:#abadb3;box-sizing:border-box"></div><span class="t" style="left:1214px;top:673px;font:13px 'Liberation Sans',sans-serif;color:#000;line-height:15px">27</span>
<div style="left:1169px;top:698px;width:12px;height:12px;border-radius:50%;border:1px solid #8e8f8f;background:radial-gradient(circle at 50% 40%,#fdfdfd 0 2px,#d8d8d8 6px);box-sizing:border-box"></div>
<span class="t" style="left:1185px;top:697px;font:13px 'Liberation Sans',sans-serif;color:#000;line-height:15px">b:</span>
<div style="left:1209px;top:694px;width:56px;height:20px;background:#fff;border:1px solid #d3d7db;border-top-color:#abadb3;box-sizing:border-box"></div><span class="t" style="left:1214px;top:697px;font:13px 'Liberation Sans',sans-serif;color:#000;line-height:15px">7</span>
<span class="t" style="left:1180px;top:725px;width:26px;text-align:right;font:13px 'Liberation Sans',sans-serif;color:#000;line-height:15px">C:</span>
<div style="left:1209px;top:722px;width:45px;height:20px;background:#fff;border:1px solid #d3d7db;border-top-color:#abadb3;box-sizing:border-box"></div><span class="t" style="left:1214px;top:725px;font:13px 'Liberation Sans',sans-serif;color:#000;line-height:15px">7</span>
<span class="t" style="left:1258px;top:725px;font:13px 'Liberation Sans',sans-serif;color:#000;line-height:15px">%</span>
<span class="t" style="left:1180px;top:749px;width:26px;text-align:right;font:13px 'Liberation Sans',sans-serif;color:#000;line-height:15px">M:</span>
<div style="left:1209px;top:746px;width:45px;height:20px;background:#fff;border:1px solid #d3d7db;border-top-color:#abadb3;box-sizing:border-box"></div><span class="t" style="left:1214px;top:749px;font:13px 'Liberation Sans',sans-serif;color:#000;line-height:15px">44</span>
<span class="t" style="left:1258px;top:749px;font:13px 'Liberation Sans',sans-serif;color:#000;line-height:15px">%</span>
<span class="t" style="left:1180px;top:773px;width:26px;text-align:right;font:13px 'Liberation Sans',sans-serif;color:#000;line-height:15px">Y:</span>
<div style="left:1209px;top:770px;width:45px;height:20px;background:#fff;border:1px solid #d3d7db;border-top-color:#abadb3;box-sizing:border-box"></div><span class="t" style="left:1214px;top:773px;font:13px 'Liberation Sans',sans-serif;color:#000;line-height:15px">20</span>
<span class="t" style="left:1258px;top:773px;font:13px 'Liberation Sans',sans-serif;color:#000;line-height:15px">%</span>
<span class="t" style="left:1180px;top:797px;width:26px;text-align:right;font:13px 'Liberation Sans',sans-serif;color:#000;line-height:15px">K:</span>
<div style="left:1209px;top:794px;width:45px;height:20px;background:#fff;border:1px solid #d3d7db;border-top-color:#abadb3;box-sizing:border-box"></div><span class="t" style="left:1214px;top:797px;font:13px 'Liberation Sans',sans-serif;color:#000;line-height:15px">0</span>
<span class="t" style="left:1258px;top:797px;font:13px 'Liberation Sans',sans-serif;color:#000;line-height:15px">%</span>
<span class="t" style="left:1038px;top:801px;font:13px 'Liberation Sans',sans-serif;color:#000;line-height:15px">#</span>
<div style="left:1051px;top:798px;width:110px;height:19px;background:#fff;border:1px solid #d3d7db;border-top-color:#abadb3;box-sizing:border-box"></div><span class="t" style="left:1056px;top:801px;font:13px 'Liberation Sans',sans-serif;color:#000;line-height:15px">efa9b1</span>
<div style="left:730px;top:801px;width:13px;height:13px;border:1px solid #8e8f8f;background:linear-gradient(135deg,#d9dcdf,#f8f8f8);box-shadow:inset 0 0 0 1px #f4f4f4;box-sizing:border-box"></div>
<span class="t" style="left:746px;top:801px;font:12px 'Liberation Sans',sans-serif;color:#000;line-height:14px">只有 Web 颜色</span>
<!-- layer style dialog -->
<div style="left:1288px;top:480px;width:9px;height:350px;background:linear-gradient(90deg,#77736f,#4a4746 40%,#333)"></div>
<div style="left:1296px;top:416px;width:630px;height:511px;background:linear-gradient(90deg,#f2e0d6 0,#f0ddd0 64px,#99918e 73px,#8e8680 100px,#86705f 140px,#6e523f 190px,#6b4e3c 246px,#7a5a50 252px,#7c5c54 270px,#7f6454 276px,#7f6454 305px,#765c4e 308px,#7f6454 311px,#806555 440px,#958478 490px,#a9a6a2 540px,#aaa7a3 100%);border:1px solid #3b3532;border-radius:7px;box-sizing:border-box;box-shadow:0 0 0 1px rgba(255,255,255,.3) inset,0 2px 9px 1px rgba(0,0,0,.5)"></div>
<div style="left:1297px;top:444px;width:6px;height:477px;background:linear-gradient(#ecd6c8 0,#dcc6a8 200px,#dcc6a8 448px,#6b4a35 452px)"></div>
<div style="left:1301px;top:920px;width:620px;height:6px;background:#6b4a35;border-radius:0 0 0 5px"></div>
<div style="left:1915px;top:444px;width:5px;height:477px;background:linear-gradient(#aaa7a3 0,#aaa7a3 115px,#6f4e44 120px)"></div>
<div style="left:1641px;top:920px;width:57px;height:5px;background:#e0b0a8;border-radius:2px;filter:blur(1px)"></div>
<div style="left:1642px;top:431px;width:56px;height:16px;background:#e8b8b0;border-radius:5px;filter:blur(1.500px)"></div>
<span class="t" style="left:1303px;top:422px;font:12px 'Liberation Sans',sans-serif;color:#000;line-height:14px;text-shadow:0 0 6px #fff,0 0 6px #fff,0 0 3px #fff">图层样式</span>
<div style="left:1868px;top:417px;width:46px;height:18px;background:linear-gradient(#e9a9a4 0,#dc7a78 45%,#cf3a40 50%,#d8505a 80%,#e58a80 100%);border:1px solid #7a4a44;border-top:none;border-radius:0 0 4px 4px;box-sizing:border-box;box-shadow:inset 0 0 0 1px rgba(255,255,255,.35)"></div><svg style="left:1885px;top:420px" width="13" height="11" viewBox="0 0 13 11"><path d="M3 2.500l7 6M10 2.500l-7 6" stroke="#5a4a4a" stroke-width="4.200" stroke-linecap="square"/><path d="M3 2.500l7 6M10 2.500l-7 6" stroke="#fff" stroke-width="2.600" stroke-linecap="square"/></svg>
<div style="left:1302px;top:444px;width:613px;height:477px;background:#ececec;border:1px solid #6a625c;box-sizing:border-box"></div>
<div style="left:1314px;top:460px;width:92px;height:448px;border:1px solid #aaa69e;box-sizing:border-box"></div>
<span class="t" style="left:1320px;top:461px;font:12px 'Liberation Sans',sans-serif;color:#000;line-height:14px">样式</span>
<div style="left:1315px;top:482px;width:90px;height:1px;background:#aaa69e"></div>
<div style="left:1315px;top:484px;width:90px;height:1px;background:#aaa69e"></div>
<span class="t" style="left:1320px;top:485px;font:12px 'Liberation Sans',sans-serif;color:#000;line-height:14px">混合选项:自定</span>
<div style="left:1315px;top:506px;width:90px;height:1px;background:#aaa69e"></div>
<div style="left:1315px;top:528px;width:90px;height:1px;background:#f8f8f8"></div>
<div style="left:1320px;top:511px;width:11px;height:11px;border:1px solid #8e8f8f;background:linear-gradient(135deg,#d9dcdf,#f8f8f8);box-shadow:inset 0 0 0 1px #f4f4f4;box-sizing:border-box"></div>
<span class="t" style="left:1336px;top:511px;font:12px 'Liberation Sans',sans-serif;color:#000;line-height:14px">斜面和浮雕</span>
<div style="left:1315px;top:550px;width:90px;height:1px;background:#f8f8f8"></div>
<div style="left:1334px;top:533px;width:11px;height:11px;border:1px solid #8e8f8f;background:linear-gradient(135deg,#d9dcdf,#f8f8f8);box-shadow:inset 0 0 0 1px #f4f4f4;box-sizing:border-box"></div>
<span class="t" style="left:1350px;top:533px;font:12px 'Liberation Sans',sans-serif;color:#000;line-height:14px">等高线</span>
<div style="left:1315px;top:572px;width:90px;height:1px;background:#f8f8f8"></div>
<div style="left:1334px;top:555px;width:11px;height:11px;border:1px solid #8e8f8f;background:linear-gradient(135deg,#d9dcdf,#f8f8f8);box-shadow:inset 0 0 0 1px #f4f4f4;box-sizing:border-box"></div>
<span class="t" style="left:1350px;top:555px;font:12px 'Liberation Sans',sans-serif;color:#000;line-height:14px">纹理</span>
<div style="left:1315px;top:594px;width:90px;height:1px;background:#f8f8f8"></div>
<div style="left:1320px;top:577px;width:11px;height:11px;border:1px solid #8e8f8f;background:linear-gradient(135deg,#d9dcdf,#f8f8f8);box-shadow:inset 0 0 0 1px #f4f4f4;box-sizing:border-box"></div>
<span class="t" style="left:1336px;top:577px;font:12px 'Liberation Sans',sans-serif;color:#000;line-height:14px">描边</span>
<div style="left:1315px;top:616px;width:90px;height:1px;background:#f8f8f8"></div>
<div style="left:1320px;top:599px;width:11px;height:11px;border:1px solid #8e8f8f;background:linear-gradient(135deg,#d9dcdf,#f8f8f8);box-shadow:inset 0 0 0 1px #f4f4f4;box-sizing:border-box"></div>
<span class="t" style="left:1336px;top:599px;font:12px 'Liberation Sans',sans-serif;color:#000;line-height:14px">内阴影</span>
<div style="left:1315px;top:638px;width:90px;height:1px;background:#f8f8f8"></div>
<div style="left:1320px;top:621px;width:11px;height:11px;border:1px solid #8e8f8f;background:linear-gradient(135deg,#d9dcdf,#f8f8f8);box-shadow:inset 0 0 0 1px #f4f4f4;box-sizing:border-box"></div>
<span class="t" style="left:1336px;top:621px;font:12px 'Liberation Sans',sans-serif;color:#000;line-height:14px">内发光</span>
<div style="left:1315px;top:660px;width:90px;height:1px;background:#f8f8f8"></div>
<div style="left:1320px;top:643px;width:11px;height:11px;border:1px solid #8e8f8f;background:linear-gradient(135deg,#d9dcdf,#f8f8f8);box-shadow:inset 0 0 0 1px #f4f4f4;box-sizing:border-box"></div>
<span class="t" style="left:1336px;top:643px;font:12px 'Liberation Sans',sans-serif;color:#000;line-height:14px">光泽</span>
<div style="left:1315px;top:661px;width:90px;height:21px;background:#489bd2"></div>
<div style="left:1320px;top:665px;width:11px;height:11px;border:1px solid #8e8f8f;background:linear-gradient(135deg,#d9dcdf,#f8f8f8);box-shadow:inset 0 0 0 1px #f4f4f4;box-sizing:border-box"></div><svg style="left:1321px;top:666px" width="9" height="9" viewBox="0 0 9 9"><path d="M1.500 4.500l2.300 2.800l4-6" fill="none" stroke="#2a3f9a" stroke-width="1.700"/></svg>
<span class="t" style="left:1336px;top:665px;font:12px 'Liberation Sans',sans-serif;color:#000;line-height:14px">颜色叠加</span>
<div style="left:1315px;top:704px;width:90px;height:1px;background:#f8f8f8"></div>
<div style="left:1320px;top:687px;width:11px;height:11px;border:1px solid #8e8f8f;background:linear-gradient(135deg,#d9dcdf,#f8f8f8);box-shadow:inset 0 0 0 1px #f4f4f4;box-sizing:border-box"></div>
<span class="t" style="left:1336px;top:687px;font:12px 'Liberation Sans',sans-serif;color:#000;line-height:14px">渐变叠加</span>
<div style="left:1315px;top:726px;width:90px;height:1px;background:#f8f8f8"></div>
<div style="left:1320px;top:709px;width:11px;height:11px;border:1px solid #8e8f8f;background:linear-gradient(135deg,#d9dcdf,#f8f8f8);box-shadow:inset 0 0 0 1px #f4f4f4;box-sizing:border-box"></div>
<span class="t" style="left:1336px;top:709px;font:12px 'Liberation Sans',sans-serif;color:#000;line-height:14px">图案叠加</span>
<div style="left:1315px;top:748px;width:90px;height:1px;background:#f8f8f8"></div>
<div style="left:1320px;top:731px;width:11px;height:11px;border:1px solid #8e8f8f;background:linear-gradient(135deg,#d9dcdf,#f8f8f8);box-shadow:inset 0 0 0 1px #f4f4f4;box-sizing:border-box"></div>
<span class="t" style="left:1336px;top:731px;font:12px 'Liberation Sans',sans-serif;color:#000;line-height:14px">外发光</span>
<div style="left:1315px;top:770px;width:90px;height:1px;background:#f8f8f8"></div>
<div style="left:1320px;top:753px;width:11px;height:11px;border:1px solid #8e8f8f;background:linear-gradient(135deg,#d9dcdf,#f8f8f8);box-shadow:inset 0 0 0 1px #f4f4f4;box-sizing:border-box"></div>
<span class="t" style="left:1336px;top:753px;font:12px 'Liberation Sans',sans-serif;color:#000;line-height:14px">投影</span>
<div style="left:1422px;top:463px;width:355px;height:446px;border:1px solid #aaa69e;box-sizing:border-box"></div>
<span class="t" style="left:1440px;top:455px;font:12px 'Liberation Sans',sans-serif;color:#000;line-height:14px;background:#ececec;padding:0 5px">颜色叠加</span>
<div style="left:1432px;top:482px;width:335px;height:68px;border:1px solid #aaa69e;box-sizing:border-box"></div>
<span class="t" style="left:1449px;top:474px;font:12px 'Liberation Sans',sans-serif;color:#000;line-height:14px;background:#ececec;padding:0 5px">颜色</span>
<span class="t" style="left:1456px;top:501px;font:12px 'Liberation Sans',sans-serif;color:#000;line-height:14px">混合模式(B):</span>
<div style="left:1528px;top:497px;width:132px;height:21px;background:#fff;border:1px solid #c8ccd2;border-top-color:#abadb3;box-sizing:border-box"></div>
<span class="t" style="left:1534px;top:501px;font:12px 'Liberation Sans',sans-serif;color:#000;line-height:14px">正常</span>
<svg style="left:1647px;top:506px" width="8" height="5" viewBox="0 0 8 5"><path d="M0 0h8l-4 4.500z" fill="#111"/></svg>
<div style="left:1663px;top:499px;width:43px;height:17px;background:#e8a5a9;border:1px solid #b0a8a8;box-sizing:border-box"></div>
<span class="t" style="left:1455px;top:524px;font:12px 'Liberation Sans',sans-serif;color:#000;line-height:14px">不透明度(O):</span>
<div style="left:1531px;top:527px;width:100px;height:4px;background:#c8c6c2;border:1px solid #9a9892;border-radius:2px;box-sizing:border-box"></div>
<svg style="left:1624px;top:528px" width="12" height="11" viewBox="0 0 12 11"><path d="M6 0.500l5 4.500v5h-10v-5z" fill="#dcdcdc" stroke="#777" stroke-width="1"/></svg>
<div style="left:1638px;top:523px;width:54px;height:18px;background:#fff;border:1px solid #d3d7db;border-top-color:#abadb3;box-sizing:border-box"></div><span class="t" style="left:1643px;top:525px;font:12px 'Liberation Sans',sans-serif;color:#000;line-height:15px">100</span>
<span class="t" style="left:1694px;top:524px;font:13px 'Liberation Sans',sans-serif;color:#000;line-height:15px">%</span>
<div style="left:1496px;top:556px;width:98px;height:19px;background:linear-gradient(#f4f4f4 0,#ececec 45%,#dcdcdc 50%,#d2d2d2 100%);border:1px solid #707070;box-shadow:inset 0 0 0 1px #fbfbfb;border-radius:3px;box-sizing:border-box"></div><span class="t" style="left:1496px;top:559px;width:98px;text-align:center;font:12px 'Liberation Sans',sans-serif;color:#000;line-height:14px">设置为默认值</span>
<div style="left:1604px;top:556px;width:98px;height:19px;background:linear-gradient(#f4f4f4 0,#ececec 45%,#dcdcdc 50%,#d2d2d2 100%);border:1px solid #707070;box-shadow:inset 0 0 0 1px #fbfbfb;border-radius:3px;box-sizing:border-box"></div><span class="t" style="left:1604px;top:559px;width:98px;text-align:center;font:12px 'Liberation Sans',sans-serif;color:#000;line-height:14px">复位为默认值</span>
<div style="left:1793px;top:460px;width:111px;height:18px;background:linear-gradient(#eaf5fb 0,#d6eef9 45%,#bfe4f6 50%,#b4def3 100%);border:1px solid #3c96d6;box-shadow:inset 0 0 0 1px #5fc4f2, inset 0 0 0 2px rgba(255,255,255,.6);border-radius:3px;box-sizing:border-box"></div><span class="t" style="left:1793px;top:464px;width:111px;text-align:center;font:12px 'Liberation Sans',sans-serif;color:#000;line-height:14px">确定</span>
<div style="left:1793px;top:488px;width:111px;height:18px;background:linear-gradient(#f4f4f4 0,#ececec 45%,#dcdcdc 50%,#d2d2d2 100%);border:1px solid #707070;box-shadow:inset 0 0 0 1px #fbfbfb;border-radius:3px;box-sizing:border-box"></div><span class="t" style="left:1793px;top:492px;width:111px;text-align:center;font:12px 'Liberation Sans',sans-serif;color:#000;line-height:14px">取消</span>
<div style="left:1793px;top:516px;width:111px;height:18px;background:linear-gradient(#f4f4f4 0,#ececec 45%,#dcdcdc 50%,#d2d2d2 100%);border:1px solid #707070;box-shadow:inset 0 0 0 1px #fbfbfb;border-radius:3px;box-sizing:border-box"></div><span class="t" style="left:1793px;top:520px;width:111px;text-align:center;font:12px 'Liberation Sans',sans-serif;color:#000;line-height:14px">新建样式(W)...</span>
<div style="left:1814px;top:543px;width:12px;height:12px;border:1px solid #8e8f8f;background:linear-gradient(135deg,#d9dcdf,#f8f8f8);box-shadow:inset 0 0 0 1px #f4f4f4;box-sizing:border-box"></div><svg style="left:1815px;top:544px" width="9" height="9" viewBox="0 0 9 9"><path d="M1.500 4.500l2.300 2.800l4-6" fill="none" stroke="#2a3f9a" stroke-width="1.700"/></svg>
<span class="t" style="left:1830px;top:543px;font:12px 'Liberation Sans',sans-serif;color:#000;line-height:14px">预览(V)</span>
<div style="left:1815px;top:564px;width:66px;height:65px;background:#d4d2d0;border:1px solid #b9c1c4;box-sizing:border-box"></div>
<div style="left:1832px;top:582px;width:31px;height:31px;background:#e8a5a9"></div>
</div></body></html>
